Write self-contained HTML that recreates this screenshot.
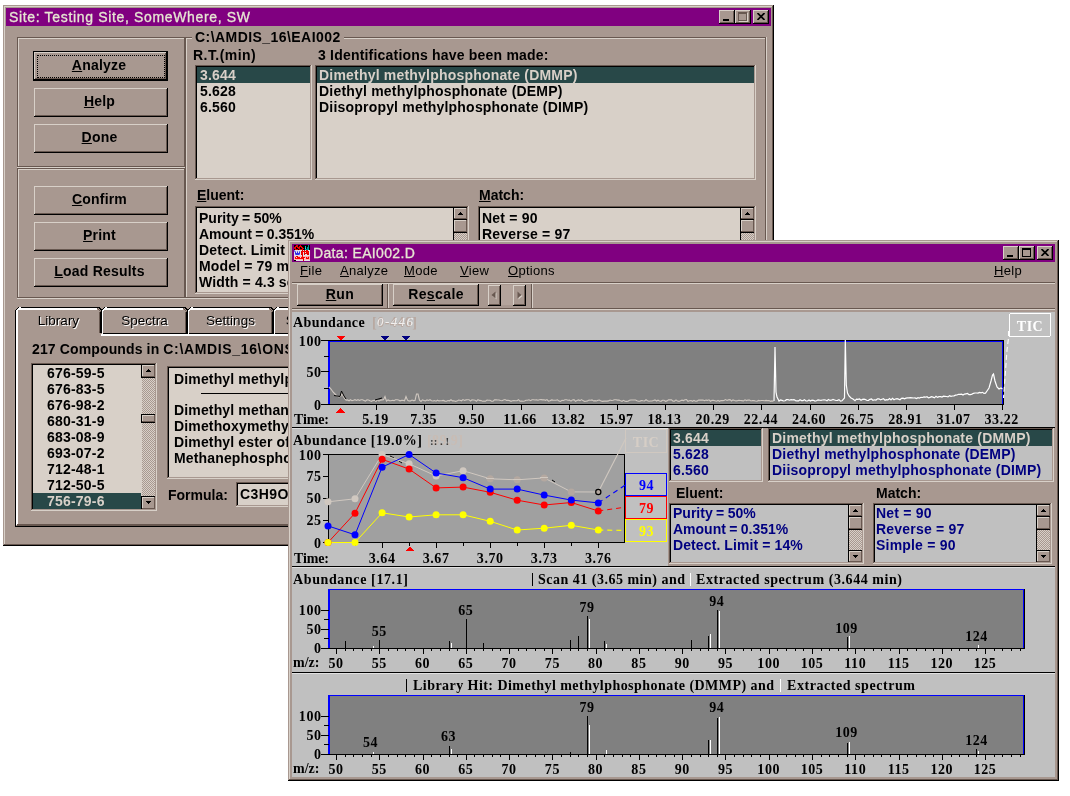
<!DOCTYPE html>
<html><head><meta charset="utf-8"><title>AMDIS</title>
<style>
html,body{margin:0;padding:0}
body{width:1070px;height:796px;position:relative;overflow:hidden;background:#fff;font-family:"Liberation Sans",sans-serif}
div,svg,span.a{position:absolute;box-sizing:border-box}
.t{white-space:pre;line-height:16px;height:16px;color:#000;will-change:transform}
.b{font-family:"Liberation Sans",sans-serif;font-weight:bold;font-size:14px;letter-spacing:0.2px}
.n{font-family:"Liberation Sans",sans-serif;font-weight:normal;font-size:14px;letter-spacing:0.3px}
.s{font-family:"Liberation Serif",serif;font-weight:bold;font-size:14px;letter-spacing:0.4px}
u{text-decoration:underline;text-underline-offset:1px}
svg text{font-family:"Liberation Serif",serif;font-weight:bold;font-size:14px}
</style></head>
<body>
<div style="left:3px;top:5px;width:771px;height:541px;background:#a89890;"></div>
<div style="left:3px;top:5px;width:771px;height:1px;background:#a89890;"></div>
<div style="left:3px;top:5px;width:1px;height:541px;background:#a89890;"></div>
<div style="left:3px;top:545px;width:771px;height:1px;background:#000;"></div>
<div style="left:773px;top:5px;width:1px;height:541px;background:#000;"></div>
<div style="left:4px;top:6px;width:769px;height:1px;background:#d8d0c8;"></div>
<div style="left:4px;top:6px;width:1px;height:539px;background:#d8d0c8;"></div>
<div style="left:4px;top:544px;width:769px;height:1px;background:#685850;"></div>
<div style="left:772px;top:6px;width:1px;height:539px;background:#685850;"></div>
<div style="left:6px;top:8px;width:765px;height:18px;background:#800080;"></div>
<div class="t n" style="left:9px;top:9px;color:#e6e6d2;letter-spacing:0.66px;-webkit-text-stroke:0.3px #e6e6d2">Site: Testing Site, SomeWhere, SW</div>
<div style="left:719px;top:10px;width:16px;height:14px;background:#a89890;"></div>
<div style="left:719px;top:10px;width:16px;height:1px;background:#d8d0c8;"></div>
<div style="left:719px;top:10px;width:1px;height:14px;background:#d8d0c8;"></div>
<div style="left:719px;top:23px;width:16px;height:1px;background:#000;"></div>
<div style="left:734px;top:10px;width:1px;height:14px;background:#000;"></div>
<div style="left:720px;top:11px;width:14px;height:1px;background:#a89890;"></div>
<div style="left:720px;top:11px;width:1px;height:12px;background:#a89890;"></div>
<div style="left:720px;top:22px;width:14px;height:1px;background:#685850;"></div>
<div style="left:733px;top:11px;width:1px;height:12px;background:#685850;"></div>
<div style="left:723px;top:19px;width:6px;height:2px;background:#000;"></div>
<div style="left:735px;top:10px;width:16px;height:14px;background:#a89890;"></div>
<div style="left:735px;top:10px;width:16px;height:1px;background:#d8d0c8;"></div>
<div style="left:735px;top:10px;width:1px;height:14px;background:#d8d0c8;"></div>
<div style="left:735px;top:23px;width:16px;height:1px;background:#000;"></div>
<div style="left:750px;top:10px;width:1px;height:14px;background:#000;"></div>
<div style="left:736px;top:11px;width:14px;height:1px;background:#a89890;"></div>
<div style="left:736px;top:11px;width:1px;height:12px;background:#a89890;"></div>
<div style="left:736px;top:22px;width:14px;height:1px;background:#685850;"></div>
<div style="left:749px;top:11px;width:1px;height:12px;background:#685850;"></div>
<div style="left:738px;top:12px;width:9px;height:9px;border:1px solid #685850;border-top-width:2px;box-shadow:1px 1px 0 #d8d0c8"></div>
<div style="left:753px;top:10px;width:16px;height:14px;background:#a89890;"></div>
<div style="left:753px;top:10px;width:16px;height:1px;background:#d8d0c8;"></div>
<div style="left:753px;top:10px;width:1px;height:14px;background:#d8d0c8;"></div>
<div style="left:753px;top:23px;width:16px;height:1px;background:#000;"></div>
<div style="left:768px;top:10px;width:1px;height:14px;background:#000;"></div>
<div style="left:754px;top:11px;width:14px;height:1px;background:#a89890;"></div>
<div style="left:754px;top:11px;width:1px;height:12px;background:#a89890;"></div>
<div style="left:754px;top:22px;width:14px;height:1px;background:#685850;"></div>
<div style="left:767px;top:11px;width:1px;height:12px;background:#685850;"></div>
<svg style="left:757px;top:13px" width="8" height="7" viewBox="0 0 8 7"><path d="M0.5 0 L7.5 7 M7.5 0 L0.5 7" stroke="#000" stroke-width="1.7" fill="none"/></svg>
<div style="left:17px;top:37px;width:169px;height:1px;background:#685850;"></div>
<div style="left:17px;top:37px;width:1px;height:131px;background:#685850;"></div>
<div style="left:17px;top:167px;width:169px;height:1px;background:#d8d0c8;"></div>
<div style="left:185px;top:37px;width:1px;height:131px;background:#d8d0c8;"></div>
<div style="left:18px;top:38px;width:167px;height:1px;background:#d8d0c8;"></div>
<div style="left:18px;top:38px;width:1px;height:129px;background:#d8d0c8;"></div>
<div style="left:18px;top:166px;width:167px;height:1px;background:#685850;"></div>
<div style="left:184px;top:38px;width:1px;height:129px;background:#685850;"></div>
<div style="left:17px;top:168px;width:169px;height:1px;background:#685850;"></div>
<div style="left:17px;top:168px;width:1px;height:131px;background:#685850;"></div>
<div style="left:17px;top:298px;width:169px;height:1px;background:#d8d0c8;"></div>
<div style="left:185px;top:168px;width:1px;height:131px;background:#d8d0c8;"></div>
<div style="left:18px;top:169px;width:167px;height:1px;background:#d8d0c8;"></div>
<div style="left:18px;top:169px;width:1px;height:129px;background:#d8d0c8;"></div>
<div style="left:18px;top:297px;width:167px;height:1px;background:#685850;"></div>
<div style="left:184px;top:169px;width:1px;height:129px;background:#685850;"></div>
<div style="left:185px;top:37px;width:582px;height:1px;background:#685850;"></div>
<div style="left:185px;top:37px;width:1px;height:262px;background:#685850;"></div>
<div style="left:185px;top:298px;width:582px;height:1px;background:#d8d0c8;"></div>
<div style="left:766px;top:37px;width:1px;height:262px;background:#d8d0c8;"></div>
<div style="left:186px;top:38px;width:580px;height:1px;background:#d8d0c8;"></div>
<div style="left:186px;top:38px;width:1px;height:260px;background:#d8d0c8;"></div>
<div style="left:186px;top:297px;width:580px;height:1px;background:#685850;"></div>
<div style="left:765px;top:38px;width:1px;height:260px;background:#685850;"></div>
<div style="left:192px;top:30px;width:152px;height:14px;background:#a89890;"></div>
<div class="t b" style="left:195px;top:29px;letter-spacing:0.44px">C:\AMDIS_16\EAI002</div>
<div style="left:33px;top:51px;width:135px;height:30px;background:#000;"></div>
<div style="left:34px;top:52px;width:133px;height:28px;background:#a89890;"></div>
<div style="left:34px;top:52px;width:133px;height:1px;background:#d8d0c8;"></div>
<div style="left:34px;top:52px;width:1px;height:28px;background:#d8d0c8;"></div>
<div style="left:34px;top:79px;width:133px;height:1px;background:#000;"></div>
<div style="left:166px;top:52px;width:1px;height:28px;background:#000;"></div>
<div style="left:35px;top:53px;width:131px;height:1px;background:#a89890;"></div>
<div style="left:35px;top:53px;width:1px;height:26px;background:#a89890;"></div>
<div style="left:35px;top:78px;width:131px;height:1px;background:#685850;"></div>
<div style="left:165px;top:53px;width:1px;height:26px;background:#685850;"></div>
<div style="left:37px;top:55px;width:128px;height:23px;border:1px dotted #000"></div>
<div class="t b" style="left:33px;top:57px;width:132px;text-align:center;"><u>A</u>nalyze</div>
<div style="left:34px;top:88px;width:134px;height:29px;background:#a89890;"></div>
<div style="left:34px;top:88px;width:134px;height:1px;background:#d8d0c8;"></div>
<div style="left:34px;top:88px;width:1px;height:29px;background:#d8d0c8;"></div>
<div style="left:34px;top:116px;width:134px;height:1px;background:#000;"></div>
<div style="left:167px;top:88px;width:1px;height:29px;background:#000;"></div>
<div style="left:35px;top:89px;width:132px;height:1px;background:#a89890;"></div>
<div style="left:35px;top:89px;width:1px;height:27px;background:#a89890;"></div>
<div style="left:35px;top:115px;width:132px;height:1px;background:#685850;"></div>
<div style="left:166px;top:89px;width:1px;height:27px;background:#685850;"></div>
<div class="t b" style="left:34px;top:93px;width:131px;text-align:center;"><u>H</u>elp</div>
<div style="left:34px;top:124px;width:134px;height:29px;background:#a89890;"></div>
<div style="left:34px;top:124px;width:134px;height:1px;background:#d8d0c8;"></div>
<div style="left:34px;top:124px;width:1px;height:29px;background:#d8d0c8;"></div>
<div style="left:34px;top:152px;width:134px;height:1px;background:#000;"></div>
<div style="left:167px;top:124px;width:1px;height:29px;background:#000;"></div>
<div style="left:35px;top:125px;width:132px;height:1px;background:#a89890;"></div>
<div style="left:35px;top:125px;width:1px;height:27px;background:#a89890;"></div>
<div style="left:35px;top:151px;width:132px;height:1px;background:#685850;"></div>
<div style="left:166px;top:125px;width:1px;height:27px;background:#685850;"></div>
<div class="t b" style="left:34px;top:129px;width:131px;text-align:center;"><u>D</u>one</div>
<div style="left:34px;top:186px;width:134px;height:29px;background:#a89890;"></div>
<div style="left:34px;top:186px;width:134px;height:1px;background:#d8d0c8;"></div>
<div style="left:34px;top:186px;width:1px;height:29px;background:#d8d0c8;"></div>
<div style="left:34px;top:214px;width:134px;height:1px;background:#000;"></div>
<div style="left:167px;top:186px;width:1px;height:29px;background:#000;"></div>
<div style="left:35px;top:187px;width:132px;height:1px;background:#a89890;"></div>
<div style="left:35px;top:187px;width:1px;height:27px;background:#a89890;"></div>
<div style="left:35px;top:213px;width:132px;height:1px;background:#685850;"></div>
<div style="left:166px;top:187px;width:1px;height:27px;background:#685850;"></div>
<div class="t b" style="left:34px;top:191px;width:131px;text-align:center;"><u>C</u>onfirm</div>
<div style="left:34px;top:222px;width:134px;height:29px;background:#a89890;"></div>
<div style="left:34px;top:222px;width:134px;height:1px;background:#d8d0c8;"></div>
<div style="left:34px;top:222px;width:1px;height:29px;background:#d8d0c8;"></div>
<div style="left:34px;top:250px;width:134px;height:1px;background:#000;"></div>
<div style="left:167px;top:222px;width:1px;height:29px;background:#000;"></div>
<div style="left:35px;top:223px;width:132px;height:1px;background:#a89890;"></div>
<div style="left:35px;top:223px;width:1px;height:27px;background:#a89890;"></div>
<div style="left:35px;top:249px;width:132px;height:1px;background:#685850;"></div>
<div style="left:166px;top:223px;width:1px;height:27px;background:#685850;"></div>
<div class="t b" style="left:34px;top:227px;width:131px;text-align:center;"><u>P</u>rint</div>
<div style="left:34px;top:258px;width:134px;height:29px;background:#a89890;"></div>
<div style="left:34px;top:258px;width:134px;height:1px;background:#d8d0c8;"></div>
<div style="left:34px;top:258px;width:1px;height:29px;background:#d8d0c8;"></div>
<div style="left:34px;top:286px;width:134px;height:1px;background:#000;"></div>
<div style="left:167px;top:258px;width:1px;height:29px;background:#000;"></div>
<div style="left:35px;top:259px;width:132px;height:1px;background:#a89890;"></div>
<div style="left:35px;top:259px;width:1px;height:27px;background:#a89890;"></div>
<div style="left:35px;top:285px;width:132px;height:1px;background:#685850;"></div>
<div style="left:166px;top:259px;width:1px;height:27px;background:#685850;"></div>
<div class="t b" style="left:34px;top:263px;width:131px;text-align:center;"><u>L</u>oad Results</div>
<div class="t b" style="left:193px;top:47px;letter-spacing:0.45px">R.T.(min)</div>
<div class="t b" style="left:318px;top:47px;">3 Identifications have been made:</div>
<div style="left:195px;top:65px;width:117px;height:115px;background:#d8d0c8;"></div>
<div style="left:195px;top:65px;width:117px;height:1px;background:#685850;"></div>
<div style="left:195px;top:65px;width:1px;height:115px;background:#685850;"></div>
<div style="left:195px;top:179px;width:117px;height:1px;background:#d8d0c8;"></div>
<div style="left:311px;top:65px;width:1px;height:115px;background:#d8d0c8;"></div>
<div style="left:196px;top:66px;width:115px;height:1px;background:#000;"></div>
<div style="left:196px;top:66px;width:1px;height:113px;background:#000;"></div>
<div style="left:196px;top:178px;width:115px;height:1px;background:#a89890;"></div>
<div style="left:310px;top:66px;width:1px;height:113px;background:#a89890;"></div>
<div style="left:197px;top:67px;width:113px;height:16px;background:#284848;"></div>
<div class="t b" style="left:200px;top:67px;color:#d8d0c8">3.644</div>
<div class="t b" style="left:200px;top:83px;">5.628</div>
<div class="t b" style="left:200px;top:99px;">6.560</div>
<div style="left:315px;top:65px;width:441px;height:115px;background:#d8d0c8;"></div>
<div style="left:315px;top:65px;width:441px;height:1px;background:#685850;"></div>
<div style="left:315px;top:65px;width:1px;height:115px;background:#685850;"></div>
<div style="left:315px;top:179px;width:441px;height:1px;background:#d8d0c8;"></div>
<div style="left:755px;top:65px;width:1px;height:115px;background:#d8d0c8;"></div>
<div style="left:316px;top:66px;width:439px;height:1px;background:#000;"></div>
<div style="left:316px;top:66px;width:1px;height:113px;background:#000;"></div>
<div style="left:316px;top:178px;width:439px;height:1px;background:#a89890;"></div>
<div style="left:754px;top:66px;width:1px;height:113px;background:#a89890;"></div>
<div style="left:317px;top:67px;width:437px;height:16px;background:#284848;"></div>
<div class="t b" style="left:319px;top:67px;color:#d8d0c8">Dimethyl methylphosphonate (DMMP)</div>
<div class="t b" style="left:319px;top:83px;">Diethyl methylphosphonate (DEMP)</div>
<div class="t b" style="left:319px;top:99px;">Diisopropyl methylphosphonate (DIMP)</div>
<div class="t b" style="left:197px;top:187px;letter-spacing:0"><u>E</u>luent:</div>
<div class="t b" style="left:479px;top:187px;letter-spacing:0"><u>M</u>atch:</div>
<div style="left:195px;top:206px;width:274px;height:88px;background:#d8d0c8;"></div>
<div style="left:195px;top:206px;width:274px;height:1px;background:#685850;"></div>
<div style="left:195px;top:206px;width:1px;height:88px;background:#685850;"></div>
<div style="left:195px;top:293px;width:274px;height:1px;background:#d8d0c8;"></div>
<div style="left:468px;top:206px;width:1px;height:88px;background:#d8d0c8;"></div>
<div style="left:196px;top:207px;width:272px;height:1px;background:#000;"></div>
<div style="left:196px;top:207px;width:1px;height:86px;background:#000;"></div>
<div style="left:196px;top:292px;width:272px;height:1px;background:#a89890;"></div>
<div style="left:467px;top:207px;width:1px;height:86px;background:#a89890;"></div>
<div class="t b" style="left:199px;top:210px;letter-spacing:0;word-spacing:-0.5px">Purity = 50%</div>
<div class="t b" style="left:199px;top:226px;letter-spacing:0;word-spacing:-0.5px">Amount = 0.351%</div>
<div class="t b" style="left:199px;top:242px;letter-spacing:0.15px">Detect. Limit = 14%</div>
<div class="t b" style="left:199px;top:258px;letter-spacing:0.15px">Model = 79 m/z</div>
<div class="t b" style="left:199px;top:274px;letter-spacing:0.15px">Width = 4.3 scans</div>
<div style="left:453px;top:208px;width:1px;height:84px;background:#000;"></div>
<div style="left:454px;top:208px;width:13px;height:84px;background-color:#d8d0c8;background-image:linear-gradient(45deg,#a89890 25%,transparent 25%,transparent 75%,#a89890 75%),linear-gradient(45deg,#a89890 25%,transparent 25%,transparent 75%,#a89890 75%);background-size:2px 2px;background-position:0 0,1px 1px;"></div>
<div style="left:454px;top:208px;width:13px;height:11px;background:#a89890;"></div>
<div style="left:454px;top:208px;width:13px;height:1px;background:#d8d0c8;"></div>
<div style="left:454px;top:208px;width:1px;height:11px;background:#d8d0c8;"></div>
<div style="left:454px;top:218px;width:13px;height:1px;background:#685850;"></div>
<div style="left:466px;top:208px;width:1px;height:11px;background:#685850;"></div>
<div style="left:454px;top:219px;width:13px;height:1px;background:#000;"></div>
<svg style="left:458px;top:212px" width="5" height="3" viewBox="0 0 5 3" shape-rendering="crispEdges"><path d="M2 0h1v1h1v1h1v1h-5v-1h1v-1h1z" fill="#000"/></svg>
<div style="left:454px;top:281px;width:13px;height:11px;background:#a89890;"></div>
<div style="left:454px;top:281px;width:13px;height:1px;background:#d8d0c8;"></div>
<div style="left:454px;top:281px;width:1px;height:11px;background:#d8d0c8;"></div>
<div style="left:454px;top:291px;width:13px;height:1px;background:#685850;"></div>
<div style="left:466px;top:281px;width:1px;height:11px;background:#685850;"></div>
<div style="left:454px;top:280px;width:13px;height:1px;background:#000;"></div>
<svg style="left:458px;top:285px" width="5" height="3" viewBox="0 0 5 3" shape-rendering="crispEdges"><path d="M0 0h5v1h-1v1h-1v1h-1v-1h-1v-1h-1z" fill="#000"/></svg>
<div style="left:454px;top:220px;width:13px;height:12px;background:#a89890;"></div>
<div style="left:454px;top:220px;width:13px;height:1px;background:#d8d0c8;"></div>
<div style="left:454px;top:220px;width:1px;height:12px;background:#d8d0c8;"></div>
<div style="left:454px;top:231px;width:13px;height:1px;background:#685850;"></div>
<div style="left:466px;top:220px;width:1px;height:12px;background:#685850;"></div>
<div style="left:454px;top:232px;width:13px;height:1px;background:#000;"></div>
<div style="left:478px;top:206px;width:278px;height:88px;background:#d8d0c8;"></div>
<div style="left:478px;top:206px;width:278px;height:1px;background:#685850;"></div>
<div style="left:478px;top:206px;width:1px;height:88px;background:#685850;"></div>
<div style="left:478px;top:293px;width:278px;height:1px;background:#d8d0c8;"></div>
<div style="left:755px;top:206px;width:1px;height:88px;background:#d8d0c8;"></div>
<div style="left:479px;top:207px;width:276px;height:1px;background:#000;"></div>
<div style="left:479px;top:207px;width:1px;height:86px;background:#000;"></div>
<div style="left:479px;top:292px;width:276px;height:1px;background:#a89890;"></div>
<div style="left:754px;top:207px;width:1px;height:86px;background:#a89890;"></div>
<div class="t b" style="left:482px;top:210px;letter-spacing:0.2px">Net = 90</div>
<div class="t b" style="left:482px;top:226px;letter-spacing:0.2px">Reverse = 97</div>
<div class="t b" style="left:482px;top:242px;letter-spacing:0.2px">Simple = 90</div>
<div style="left:740px;top:208px;width:1px;height:84px;background:#000;"></div>
<div style="left:741px;top:208px;width:13px;height:84px;background-color:#d8d0c8;background-image:linear-gradient(45deg,#a89890 25%,transparent 25%,transparent 75%,#a89890 75%),linear-gradient(45deg,#a89890 25%,transparent 25%,transparent 75%,#a89890 75%);background-size:2px 2px;background-position:0 0,1px 1px;"></div>
<div style="left:741px;top:208px;width:13px;height:11px;background:#a89890;"></div>
<div style="left:741px;top:208px;width:13px;height:1px;background:#d8d0c8;"></div>
<div style="left:741px;top:208px;width:1px;height:11px;background:#d8d0c8;"></div>
<div style="left:741px;top:218px;width:13px;height:1px;background:#685850;"></div>
<div style="left:753px;top:208px;width:1px;height:11px;background:#685850;"></div>
<div style="left:741px;top:219px;width:13px;height:1px;background:#000;"></div>
<svg style="left:745px;top:212px" width="5" height="3" viewBox="0 0 5 3" shape-rendering="crispEdges"><path d="M2 0h1v1h1v1h1v1h-5v-1h1v-1h1z" fill="#000"/></svg>
<div style="left:741px;top:281px;width:13px;height:11px;background:#a89890;"></div>
<div style="left:741px;top:281px;width:13px;height:1px;background:#d8d0c8;"></div>
<div style="left:741px;top:281px;width:1px;height:11px;background:#d8d0c8;"></div>
<div style="left:741px;top:291px;width:13px;height:1px;background:#685850;"></div>
<div style="left:753px;top:281px;width:1px;height:11px;background:#685850;"></div>
<div style="left:741px;top:280px;width:13px;height:1px;background:#000;"></div>
<svg style="left:745px;top:285px" width="5" height="3" viewBox="0 0 5 3" shape-rendering="crispEdges"><path d="M0 0h5v1h-1v1h-1v1h-1v-1h-1v-1h-1z" fill="#000"/></svg>
<div style="left:741px;top:220px;width:13px;height:12px;background:#a89890;"></div>
<div style="left:741px;top:220px;width:13px;height:1px;background:#d8d0c8;"></div>
<div style="left:741px;top:220px;width:1px;height:12px;background:#d8d0c8;"></div>
<div style="left:741px;top:231px;width:13px;height:1px;background:#685850;"></div>
<div style="left:753px;top:220px;width:1px;height:12px;background:#685850;"></div>
<div style="left:741px;top:232px;width:13px;height:1px;background:#000;"></div>
<div style="left:15px;top:311px;width:757px;height:216px;background:#a89890;"></div>
<svg style="left:10px;top:300px" width="765" height="232" viewBox="10 300 765 232" shape-rendering="crispEdges"><rect x="15" y="311" width="1" height="216" fill="#000"/><rect x="16" y="311" width="2" height="214" fill="#fff"/><rect x="102" y="333" width="670" height="1" fill="#000"/><rect x="101" y="334" width="671" height="2" fill="#fff"/><rect x="17" y="524" width="755" height="2" fill="#685850"/><rect x="15" y="526" width="758" height="1" fill="#000"/><rect x="770" y="336" width="1" height="189" fill="#685850"/><rect x="771" y="334" width="2" height="193" fill="#000"/><rect x="19" y="307" width="79" height="1" fill="#000"/><rect x="19" y="308" width="78" height="2" fill="#fff"/><rect x="16" y="311" width="2" height="23" fill="#fff"/><rect x="99" y="312" width="1" height="21" fill="#685850"/><rect x="100" y="311" width="2" height="22" fill="#000"/><rect x="15" y="310" width="1" height="1" fill="#000"/><rect x="16" y="310" width="2" height="1" fill="#fff"/><rect x="98" y="307" width="2" height="1" fill="#000"/><rect x="97" y="308" width="1" height="1" fill="#685850"/><rect x="16" y="309" width="1" height="1" fill="#000"/><rect x="17" y="309" width="2" height="1" fill="#fff"/><rect x="99" y="308" width="2" height="1" fill="#000"/><rect x="98" y="309" width="1" height="1" fill="#685850"/><rect x="17" y="308" width="1" height="1" fill="#000"/><rect x="18" y="308" width="2" height="1" fill="#fff"/><rect x="100" y="309" width="2" height="1" fill="#000"/><rect x="99" y="310" width="1" height="1" fill="#685850"/><rect x="18" y="307" width="1" height="1" fill="#000"/><rect x="19" y="307" width="2" height="1" fill="#fff"/><rect x="101" y="310" width="2" height="1" fill="#000"/><rect x="100" y="311" width="1" height="1" fill="#685850"/><rect x="105" y="307" width="79" height="1" fill="#000"/><rect x="105" y="308" width="78" height="2" fill="#fff"/><rect x="102" y="311" width="1" height="23" fill="#fff"/><rect x="185" y="312" width="1" height="21" fill="#685850"/><rect x="186" y="311" width="2" height="22" fill="#000"/><rect x="101" y="310" width="1" height="1" fill="#000"/><rect x="102" y="310" width="2" height="1" fill="#fff"/><rect x="184" y="307" width="2" height="1" fill="#000"/><rect x="183" y="308" width="1" height="1" fill="#685850"/><rect x="102" y="309" width="1" height="1" fill="#000"/><rect x="103" y="309" width="2" height="1" fill="#fff"/><rect x="185" y="308" width="2" height="1" fill="#000"/><rect x="184" y="309" width="1" height="1" fill="#685850"/><rect x="103" y="308" width="1" height="1" fill="#000"/><rect x="104" y="308" width="2" height="1" fill="#fff"/><rect x="186" y="309" width="2" height="1" fill="#000"/><rect x="185" y="310" width="1" height="1" fill="#685850"/><rect x="104" y="307" width="1" height="1" fill="#000"/><rect x="105" y="307" width="2" height="1" fill="#fff"/><rect x="187" y="310" width="2" height="1" fill="#000"/><rect x="186" y="311" width="1" height="1" fill="#685850"/><rect x="191" y="307" width="79" height="1" fill="#000"/><rect x="191" y="308" width="78" height="2" fill="#fff"/><rect x="188" y="311" width="1" height="23" fill="#fff"/><rect x="271" y="312" width="1" height="21" fill="#685850"/><rect x="272" y="311" width="2" height="22" fill="#000"/><rect x="187" y="310" width="1" height="1" fill="#000"/><rect x="188" y="310" width="2" height="1" fill="#fff"/><rect x="270" y="307" width="2" height="1" fill="#000"/><rect x="269" y="308" width="1" height="1" fill="#685850"/><rect x="188" y="309" width="1" height="1" fill="#000"/><rect x="189" y="309" width="2" height="1" fill="#fff"/><rect x="271" y="308" width="2" height="1" fill="#000"/><rect x="270" y="309" width="1" height="1" fill="#685850"/><rect x="189" y="308" width="1" height="1" fill="#000"/><rect x="190" y="308" width="2" height="1" fill="#fff"/><rect x="272" y="309" width="2" height="1" fill="#000"/><rect x="271" y="310" width="1" height="1" fill="#685850"/><rect x="190" y="307" width="1" height="1" fill="#000"/><rect x="191" y="307" width="2" height="1" fill="#fff"/><rect x="273" y="310" width="2" height="1" fill="#000"/><rect x="272" y="311" width="1" height="1" fill="#685850"/><rect x="277" y="307" width="79" height="1" fill="#000"/><rect x="277" y="308" width="78" height="2" fill="#fff"/><rect x="274" y="311" width="1" height="23" fill="#fff"/><rect x="357" y="312" width="1" height="21" fill="#685850"/><rect x="358" y="311" width="2" height="22" fill="#000"/><rect x="273" y="310" width="1" height="1" fill="#000"/><rect x="274" y="310" width="2" height="1" fill="#fff"/><rect x="356" y="307" width="2" height="1" fill="#000"/><rect x="355" y="308" width="1" height="1" fill="#685850"/><rect x="274" y="309" width="1" height="1" fill="#000"/><rect x="275" y="309" width="2" height="1" fill="#fff"/><rect x="357" y="308" width="2" height="1" fill="#000"/><rect x="356" y="309" width="1" height="1" fill="#685850"/><rect x="275" y="308" width="1" height="1" fill="#000"/><rect x="276" y="308" width="2" height="1" fill="#fff"/><rect x="358" y="309" width="2" height="1" fill="#000"/><rect x="357" y="310" width="1" height="1" fill="#685850"/><rect x="276" y="307" width="1" height="1" fill="#000"/><rect x="277" y="307" width="2" height="1" fill="#fff"/><rect x="359" y="310" width="2" height="1" fill="#000"/><rect x="358" y="311" width="1" height="1" fill="#685850"/></svg>
<div class="t n" style="left:16px;top:313px;width:85px;text-align:center;font-size:13.5px;letter-spacing:0px;text-shadow:1px 1px 0 #fff;color:#000">Library</div>
<div class="t n" style="left:102px;top:313px;width:85px;text-align:center;font-size:13.5px;letter-spacing:0px;text-shadow:1px 1px 0 #fff;color:#000">Spectra</div>
<div class="t n" style="left:188px;top:313px;width:85px;text-align:center;font-size:13.5px;letter-spacing:0px;text-shadow:1px 1px 0 #fff;color:#000">Settings</div>
<div class="t n" style="left:274px;top:313px;width:85px;text-align:center;font-size:13.5px;letter-spacing:0px;text-shadow:1px 1px 0 #fff;color:#000">Standards</div>
<div class="t b" style="left:32px;top:341px;letter-spacing:0.65px"><span style="letter-spacing:0.13px">217 Compounds in </span>C:\AMDIS_16\ONSITE.MSL</div>
<div style="left:31px;top:363px;width:126px;height:148px;background:#d8d0c8;"></div>
<div style="left:31px;top:363px;width:126px;height:1px;background:#685850;"></div>
<div style="left:31px;top:363px;width:1px;height:148px;background:#685850;"></div>
<div style="left:31px;top:510px;width:126px;height:1px;background:#d8d0c8;"></div>
<div style="left:156px;top:363px;width:1px;height:148px;background:#d8d0c8;"></div>
<div style="left:32px;top:364px;width:124px;height:1px;background:#000;"></div>
<div style="left:32px;top:364px;width:1px;height:146px;background:#000;"></div>
<div style="left:32px;top:509px;width:124px;height:1px;background:#a89890;"></div>
<div style="left:155px;top:364px;width:1px;height:146px;background:#a89890;"></div>
<div class="t b" style="left:47px;top:365px;">676-59-5</div>
<div class="t b" style="left:47px;top:381px;">676-83-5</div>
<div class="t b" style="left:47px;top:397px;">676-98-2</div>
<div class="t b" style="left:47px;top:413px;">680-31-9</div>
<div class="t b" style="left:47px;top:429px;">683-08-9</div>
<div class="t b" style="left:47px;top:445px;">693-07-2</div>
<div class="t b" style="left:47px;top:461px;">712-48-1</div>
<div class="t b" style="left:47px;top:477px;">712-50-5</div>
<div style="left:33px;top:493px;width:108px;height:16px;background:#284848;"></div>
<div class="t b" style="left:47px;top:493px;color:#d8d0c8">756-79-6</div>
<div style="left:141px;top:365px;width:1px;height:144px;background:#d8d0c8;"></div>
<div style="left:141px;top:365px;width:1px;height:13px;background:#000;"></div>
<div style="left:141px;top:496px;width:1px;height:13px;background:#000;"></div>
<div style="left:141px;top:414px;width:1px;height:9px;background:#000;"></div>
<div style="left:142px;top:365px;width:13px;height:144px;background-color:#d8d0c8;background-image:linear-gradient(45deg,#a89890 25%,transparent 25%,transparent 75%,#a89890 75%),linear-gradient(45deg,#a89890 25%,transparent 25%,transparent 75%,#a89890 75%);background-size:2px 2px;background-position:0 0,1px 1px;"></div>
<div style="left:142px;top:365px;width:13px;height:12px;background:#a89890;"></div>
<div style="left:142px;top:365px;width:13px;height:1px;background:#d8d0c8;"></div>
<div style="left:142px;top:365px;width:1px;height:12px;background:#d8d0c8;"></div>
<div style="left:142px;top:376px;width:13px;height:1px;background:#685850;"></div>
<div style="left:154px;top:365px;width:1px;height:12px;background:#685850;"></div>
<div style="left:142px;top:377px;width:13px;height:1px;background:#000;"></div>
<svg style="left:146px;top:369px" width="5" height="3" viewBox="0 0 5 3" shape-rendering="crispEdges"><path d="M2 0h1v1h1v1h1v1h-5v-1h1v-1h1z" fill="#000"/></svg>
<div style="left:142px;top:497px;width:13px;height:12px;background:#a89890;"></div>
<div style="left:142px;top:497px;width:13px;height:1px;background:#d8d0c8;"></div>
<div style="left:142px;top:497px;width:1px;height:12px;background:#d8d0c8;"></div>
<div style="left:142px;top:508px;width:13px;height:1px;background:#685850;"></div>
<div style="left:154px;top:497px;width:1px;height:12px;background:#685850;"></div>
<div style="left:142px;top:496px;width:13px;height:1px;background:#000;"></div>
<svg style="left:146px;top:501px" width="5" height="3" viewBox="0 0 5 3" shape-rendering="crispEdges"><path d="M0 0h5v1h-1v1h-1v1h-1v-1h-1v-1h-1z" fill="#000"/></svg>
<div style="left:142px;top:415px;width:13px;height:7px;background:#a89890;"></div>
<div style="left:142px;top:415px;width:13px;height:1px;background:#d8d0c8;"></div>
<div style="left:142px;top:415px;width:1px;height:7px;background:#d8d0c8;"></div>
<div style="left:142px;top:421px;width:13px;height:1px;background:#685850;"></div>
<div style="left:154px;top:415px;width:1px;height:7px;background:#685850;"></div>
<div style="left:142px;top:422px;width:13px;height:1px;background:#000;"></div>
<div style="left:142px;top:414px;width:13px;height:1px;background:#000;"></div>
<div style="left:167px;top:366px;width:420px;height:113px;background:#d8d0c8;"></div>
<div style="left:167px;top:366px;width:420px;height:1px;background:#685850;"></div>
<div style="left:167px;top:366px;width:1px;height:113px;background:#685850;"></div>
<div style="left:167px;top:478px;width:420px;height:1px;background:#d8d0c8;"></div>
<div style="left:586px;top:366px;width:1px;height:113px;background:#d8d0c8;"></div>
<div style="left:168px;top:367px;width:418px;height:1px;background:#000;"></div>
<div style="left:168px;top:367px;width:1px;height:111px;background:#000;"></div>
<div style="left:168px;top:477px;width:418px;height:1px;background:#a89890;"></div>
<div style="left:585px;top:367px;width:1px;height:111px;background:#a89890;"></div>
<div class="t b" style="left:174px;top:371px;letter-spacing:0.15px">Dimethyl methylphosphonate</div>
<div style="left:201px;top:393px;width:200px;height:1px;background:#000;"></div>
<div class="t b" style="left:174px;top:402px;letter-spacing:0.15px">Dimethyl methanephosphonate</div>
<div class="t b" style="left:174px;top:418px;letter-spacing:0.15px">Dimethoxymethylphosphine oxide</div>
<div class="t b" style="left:174px;top:434px;letter-spacing:0.15px">Dimethyl ester of methylphosphonic acid</div>
<div class="t b" style="left:174px;top:450px;letter-spacing:0.15px">Methanephosphonic acid dimethyl ester</div>
<div class="t b" style="left:168px;top:487px;letter-spacing:0px">Formula:</div>
<div style="left:236px;top:482px;width:120px;height:25px;background:#d8d0c8;"></div>
<div style="left:236px;top:482px;width:120px;height:1px;background:#685850;"></div>
<div style="left:236px;top:482px;width:1px;height:25px;background:#685850;"></div>
<div style="left:236px;top:506px;width:120px;height:1px;background:#d8d0c8;"></div>
<div style="left:355px;top:482px;width:1px;height:25px;background:#d8d0c8;"></div>
<div style="left:237px;top:483px;width:118px;height:1px;background:#000;"></div>
<div style="left:237px;top:483px;width:1px;height:23px;background:#000;"></div>
<div style="left:237px;top:505px;width:118px;height:1px;background:#a89890;"></div>
<div style="left:354px;top:483px;width:1px;height:23px;background:#a89890;"></div>
<div class="t b" style="left:240px;top:486px;letter-spacing:0.4px">C3H9O3P</div>
<div style="left:288px;top:240px;width:771px;height:541px;background:#a89890;"></div>
<div style="left:288px;top:240px;width:771px;height:1px;background:#a89890;"></div>
<div style="left:288px;top:240px;width:1px;height:541px;background:#a89890;"></div>
<div style="left:288px;top:780px;width:771px;height:1px;background:#000;"></div>
<div style="left:1058px;top:240px;width:1px;height:541px;background:#000;"></div>
<div style="left:289px;top:241px;width:769px;height:1px;background:#d8d0c8;"></div>
<div style="left:289px;top:241px;width:1px;height:539px;background:#d8d0c8;"></div>
<div style="left:289px;top:779px;width:769px;height:1px;background:#685850;"></div>
<div style="left:1057px;top:241px;width:1px;height:539px;background:#685850;"></div>
<div style="left:292px;top:244px;width:763px;height:18px;background:#800080;"></div>
<svg style="left:294px;top:245px" width="16" height="16" viewBox="0 0 16 16" shape-rendering="crispEdges"><rect x="0" y="0" width="2" height="1" fill="#000"/><rect x="2" y="0" width="2" height="1" fill="#e00000"/><rect x="4" y="0" width="2" height="1" fill="#000"/><rect x="6" y="0" width="1" height="1" fill="#e00000"/><rect x="7" y="0" width="7" height="1" fill="#000"/><rect x="14" y="0" width="1" height="1" fill="#009090"/><rect x="15" y="0" width="1" height="1" fill="#000"/><rect x="0" y="1" width="1" height="1" fill="#000"/><rect x="1" y="1" width="1" height="1" fill="#e00000"/><rect x="2" y="1" width="1" height="1" fill="#ff0000"/><rect x="3" y="1" width="1" height="1" fill="#e00000"/><rect x="4" y="1" width="1" height="1" fill="#000"/><rect x="5" y="1" width="1" height="1" fill="#e00000"/><rect x="6" y="1" width="1" height="1" fill="#ff0000"/><rect x="7" y="1" width="1" height="1" fill="#e00000"/><rect x="8" y="1" width="3" height="1" fill="#000"/><rect x="11" y="1" width="1" height="1" fill="#00c8c8"/><rect x="12" y="1" width="2" height="1" fill="#000"/><rect x="14" y="1" width="1" height="1" fill="#009090"/><rect x="15" y="1" width="1" height="1" fill="#000"/><rect x="0" y="2" width="1" height="1" fill="#e00000"/><rect x="1" y="2" width="1" height="1" fill="#ff0000"/><rect x="2" y="2" width="1" height="1" fill="#000"/><rect x="3" y="2" width="1" height="1" fill="#ff0000"/><rect x="4" y="2" width="1" height="1" fill="#e00000"/><rect x="5" y="2" width="1" height="1" fill="#ff0000"/><rect x="6" y="2" width="1" height="1" fill="#000"/><rect x="7" y="2" width="1" height="1" fill="#ff0000"/><rect x="8" y="2" width="1" height="1" fill="#e00000"/><rect x="9" y="2" width="2" height="1" fill="#000"/><rect x="11" y="2" width="1" height="1" fill="#00c8c8"/><rect x="12" y="2" width="1" height="1" fill="#000"/><rect x="13" y="2" width="2" height="1" fill="#009090"/><rect x="15" y="2" width="1" height="1" fill="#000"/><rect x="0" y="3" width="2" height="1" fill="#e00000"/><rect x="2" y="3" width="2" height="1" fill="#000"/><rect x="4" y="3" width="2" height="1" fill="#e00000"/><rect x="6" y="3" width="2" height="1" fill="#000"/><rect x="8" y="3" width="1" height="1" fill="#ff0000"/><rect x="9" y="3" width="1" height="1" fill="#e00000"/><rect x="10" y="3" width="1" height="1" fill="#000"/><rect x="11" y="3" width="1" height="1" fill="#00ffff"/><rect x="12" y="3" width="1" height="1" fill="#000"/><rect x="13" y="3" width="2" height="1" fill="#009090"/><rect x="15" y="3" width="1" height="1" fill="#000"/><rect x="0" y="4" width="1" height="1" fill="#000"/><rect x="1" y="4" width="3" height="1" fill="#e00000"/><rect x="4" y="4" width="1" height="1" fill="#000"/><rect x="5" y="4" width="4" height="1" fill="#e00000"/><rect x="9" y="4" width="2" height="1" fill="#000"/><rect x="11" y="4" width="3" height="1" fill="#009090"/><rect x="14" y="4" width="1" height="1" fill="#00b0b0"/><rect x="15" y="4" width="1" height="1" fill="#000"/><rect x="0" y="5" width="1" height="1" fill="#7070f0"/><rect x="1" y="5" width="7" height="1" fill="#e4e0e8"/><rect x="8" y="5" width="1" height="1" fill="#e00000"/><rect x="9" y="5" width="1" height="1" fill="#e4e0e8"/><rect x="10" y="5" width="1" height="1" fill="#e00000"/><rect x="11" y="5" width="1" height="1" fill="#e4e0e8"/><rect x="12" y="5" width="2" height="1" fill="#e00000"/><rect x="14" y="5" width="2" height="1" fill="#e4e0e8"/><rect x="0" y="6" width="2" height="1" fill="#7070f0"/><rect x="2" y="6" width="1" height="1" fill="#e4e0e8"/><rect x="3" y="6" width="1" height="1" fill="#7070f0"/><rect x="4" y="6" width="1" height="1" fill="#e4e0e8"/><rect x="5" y="6" width="1" height="1" fill="#7070f0"/><rect x="6" y="6" width="1" height="1" fill="#e4e0e8"/><rect x="7" y="6" width="1" height="1" fill="#e00000"/><rect x="8" y="6" width="1" height="1" fill="#ff0000"/><rect x="9" y="6" width="1" height="1" fill="#e00000"/><rect x="10" y="6" width="1" height="1" fill="#ff0000"/><rect x="11" y="6" width="1" height="1" fill="#e00000"/><rect x="12" y="6" width="2" height="1" fill="#ff0000"/><rect x="14" y="6" width="1" height="1" fill="#e00000"/><rect x="15" y="6" width="1" height="1" fill="#e4e0e8"/><rect x="0" y="7" width="1" height="1" fill="#e4e0e8"/><rect x="1" y="7" width="1" height="1" fill="#3030e8"/><rect x="2" y="7" width="1" height="1" fill="#e4e0e8"/><rect x="3" y="7" width="1" height="1" fill="#3030e8"/><rect x="4" y="7" width="1" height="1" fill="#e4e0e8"/><rect x="5" y="7" width="1" height="1" fill="#3030e8"/><rect x="6" y="7" width="1" height="1" fill="#e4e0e8"/><rect x="7" y="7" width="1" height="1" fill="#e00000"/><rect x="8" y="7" width="1" height="1" fill="#ff0000"/><rect x="9" y="7" width="1" height="1" fill="#e4e0e8"/><rect x="10" y="7" width="1" height="1" fill="#ff0000"/><rect x="11" y="7" width="1" height="1" fill="#e4e0e8"/><rect x="12" y="7" width="1" height="1" fill="#e00000"/><rect x="13" y="7" width="2" height="1" fill="#ff0000"/><rect x="15" y="7" width="1" height="1" fill="#e4e0e8"/><rect x="0" y="8" width="1" height="1" fill="#e4e0e8"/><rect x="1" y="8" width="5" height="1" fill="#3030e8"/><rect x="6" y="8" width="1" height="1" fill="#e4e0e8"/><rect x="7" y="8" width="1" height="1" fill="#ff0000"/><rect x="8" y="8" width="1" height="1" fill="#e00000"/><rect x="9" y="8" width="1" height="1" fill="#e4e0e8"/><rect x="10" y="8" width="2" height="1" fill="#e00000"/><rect x="12" y="8" width="1" height="1" fill="#ff0000"/><rect x="13" y="8" width="2" height="1" fill="#e00000"/><rect x="15" y="8" width="1" height="1" fill="#e4e0e8"/><rect x="0" y="9" width="1" height="1" fill="#e4e0e8"/><rect x="1" y="9" width="1" height="1" fill="#7070f0"/><rect x="2" y="9" width="3" height="1" fill="#3030e8"/><rect x="5" y="9" width="1" height="1" fill="#7070f0"/><rect x="6" y="9" width="1" height="1" fill="#e4e0e8"/><rect x="7" y="9" width="2" height="1" fill="#e00000"/><rect x="9" y="9" width="1" height="1" fill="#e4e0e8"/><rect x="10" y="9" width="1" height="1" fill="#e00000"/><rect x="11" y="9" width="2" height="1" fill="#e4e0e8"/><rect x="13" y="9" width="2" height="1" fill="#e00000"/><rect x="15" y="9" width="1" height="1" fill="#e4e0e8"/><rect x="0" y="10" width="8" height="1" fill="#e4e0e8"/><rect x="8" y="10" width="1" height="1" fill="#e00000"/><rect x="9" y="10" width="7" height="1" fill="#e4e0e8"/><rect x="0" y="11" width="2" height="1" fill="#ffb4b4"/><rect x="2" y="11" width="2" height="1" fill="#e00000"/><rect x="4" y="11" width="4" height="1" fill="#ffb4b4"/><rect x="8" y="11" width="1" height="1" fill="#ff0000"/><rect x="9" y="11" width="5" height="1" fill="#ffb4b4"/><rect x="14" y="11" width="1" height="1" fill="#ff8080"/><rect x="15" y="11" width="1" height="1" fill="#ffb4b4"/><rect x="0" y="12" width="1" height="1" fill="#ffb4b4"/><rect x="1" y="12" width="1" height="1" fill="#ff0000"/><rect x="2" y="12" width="1" height="1" fill="#e4e0e8"/><rect x="3" y="12" width="3" height="1" fill="#ff0000"/><rect x="6" y="12" width="1" height="1" fill="#e4e0e8"/><rect x="7" y="12" width="2" height="1" fill="#ff0000"/><rect x="9" y="12" width="1" height="1" fill="#e00000"/><rect x="10" y="12" width="1" height="1" fill="#ff0000"/><rect x="11" y="12" width="1" height="1" fill="#ffb4b4"/><rect x="12" y="12" width="1" height="1" fill="#ff0000"/><rect x="13" y="12" width="1" height="1" fill="#ff8080"/><rect x="14" y="12" width="1" height="1" fill="#e00000"/><rect x="15" y="12" width="1" height="1" fill="#ffb4b4"/><rect x="0" y="13" width="1" height="1" fill="#ffb4b4"/><rect x="1" y="13" width="9" height="1" fill="#ff0000"/><rect x="10" y="13" width="1" height="1" fill="#e4e0e8"/><rect x="11" y="13" width="1" height="1" fill="#ffb4b4"/><rect x="12" y="13" width="1" height="1" fill="#ff0000"/><rect x="13" y="13" width="1" height="1" fill="#e00000"/><rect x="14" y="13" width="1" height="1" fill="#ff0000"/><rect x="15" y="13" width="1" height="1" fill="#ffb4b4"/><rect x="0" y="14" width="9" height="1" fill="#ffb4b4"/><rect x="9" y="14" width="1" height="1" fill="#e00000"/><rect x="10" y="14" width="6" height="1" fill="#ffb4b4"/><rect x="0" y="15" width="2" height="1" fill="#000"/><rect x="2" y="15" width="7" height="1" fill="#e4e0e8"/><rect x="9" y="15" width="1" height="1" fill="#e00000"/><rect x="10" y="15" width="6" height="1" fill="#e4e0e8"/></svg>
<div class="t n" style="left:313px;top:245px;color:#e6e6d2;letter-spacing:0.35px;-webkit-text-stroke:0.3px #e6e6d2">Data: EAI002.D</div>
<div style="left:1003px;top:246px;width:16px;height:14px;background:#a89890;"></div>
<div style="left:1003px;top:246px;width:16px;height:1px;background:#d8d0c8;"></div>
<div style="left:1003px;top:246px;width:1px;height:14px;background:#d8d0c8;"></div>
<div style="left:1003px;top:259px;width:16px;height:1px;background:#000;"></div>
<div style="left:1018px;top:246px;width:1px;height:14px;background:#000;"></div>
<div style="left:1004px;top:247px;width:14px;height:1px;background:#a89890;"></div>
<div style="left:1004px;top:247px;width:1px;height:12px;background:#a89890;"></div>
<div style="left:1004px;top:258px;width:14px;height:1px;background:#685850;"></div>
<div style="left:1017px;top:247px;width:1px;height:12px;background:#685850;"></div>
<div style="left:1007px;top:255px;width:6px;height:2px;background:#000;"></div>
<div style="left:1019px;top:246px;width:16px;height:14px;background:#a89890;"></div>
<div style="left:1019px;top:246px;width:16px;height:1px;background:#d8d0c8;"></div>
<div style="left:1019px;top:246px;width:1px;height:14px;background:#d8d0c8;"></div>
<div style="left:1019px;top:259px;width:16px;height:1px;background:#000;"></div>
<div style="left:1034px;top:246px;width:1px;height:14px;background:#000;"></div>
<div style="left:1020px;top:247px;width:14px;height:1px;background:#a89890;"></div>
<div style="left:1020px;top:247px;width:1px;height:12px;background:#a89890;"></div>
<div style="left:1020px;top:258px;width:14px;height:1px;background:#685850;"></div>
<div style="left:1033px;top:247px;width:1px;height:12px;background:#685850;"></div>
<div style="left:1022px;top:248px;width:9px;height:9px;border:1px solid #000;border-top-width:2px"></div>
<div style="left:1037px;top:246px;width:16px;height:14px;background:#a89890;"></div>
<div style="left:1037px;top:246px;width:16px;height:1px;background:#d8d0c8;"></div>
<div style="left:1037px;top:246px;width:1px;height:14px;background:#d8d0c8;"></div>
<div style="left:1037px;top:259px;width:16px;height:1px;background:#000;"></div>
<div style="left:1052px;top:246px;width:1px;height:14px;background:#000;"></div>
<div style="left:1038px;top:247px;width:14px;height:1px;background:#a89890;"></div>
<div style="left:1038px;top:247px;width:1px;height:12px;background:#a89890;"></div>
<div style="left:1038px;top:258px;width:14px;height:1px;background:#685850;"></div>
<div style="left:1051px;top:247px;width:1px;height:12px;background:#685850;"></div>
<svg style="left:1041px;top:249px" width="8" height="7" viewBox="0 0 8 7"><path d="M0.5 0 L7.5 7 M7.5 0 L0.5 7" stroke="#000" stroke-width="1.7" fill="none"/></svg>
<div class="t n" style="left:300px;top:263px;font-size:13px;letter-spacing:0.3px"><u>F</u>ile</div>
<div class="t n" style="left:340px;top:263px;font-size:13px;letter-spacing:0.3px"><u>A</u>nalyze</div>
<div class="t n" style="left:404px;top:263px;font-size:13px;letter-spacing:0.3px"><u>M</u>ode</div>
<div class="t n" style="left:460px;top:263px;font-size:13px;letter-spacing:0.3px"><u>V</u>iew</div>
<div class="t n" style="left:508px;top:263px;font-size:13px;letter-spacing:0.3px"><u>O</u>ptions</div>
<div class="t n" style="left:994px;top:263px;font-size:13px;letter-spacing:0.3px"><u>H</u>elp</div>
<div style="left:292px;top:282px;width:763px;height:1px;background:#685850;"></div>
<div style="left:292px;top:283px;width:763px;height:1px;background:#d8d0c8;"></div>
<div style="left:387px;top:284px;width:1px;height:24px;background:#685850;"></div>
<div style="left:388px;top:284px;width:1px;height:24px;background:#d8d0c8;"></div>
<div style="left:531px;top:284px;width:1px;height:24px;background:#685850;"></div>
<div style="left:532px;top:284px;width:1px;height:24px;background:#d8d0c8;"></div>
<div style="left:297px;top:284px;width:86px;height:22px;background:#a89890;"></div>
<div style="left:297px;top:284px;width:86px;height:1px;background:#d8d0c8;"></div>
<div style="left:297px;top:284px;width:1px;height:22px;background:#d8d0c8;"></div>
<div style="left:297px;top:305px;width:86px;height:1px;background:#000;"></div>
<div style="left:382px;top:284px;width:1px;height:22px;background:#000;"></div>
<div style="left:298px;top:285px;width:84px;height:1px;background:#a89890;"></div>
<div style="left:298px;top:285px;width:1px;height:20px;background:#a89890;"></div>
<div style="left:298px;top:304px;width:84px;height:1px;background:#685850;"></div>
<div style="left:381px;top:285px;width:1px;height:20px;background:#685850;"></div>
<div class="t b" style="left:297px;top:286px;width:86px;text-align:center;font-size:14px;letter-spacing:0.4px"><u>R</u>un</div>
<div style="left:393px;top:284px;width:86px;height:22px;background:#a89890;"></div>
<div style="left:393px;top:284px;width:86px;height:1px;background:#d8d0c8;"></div>
<div style="left:393px;top:284px;width:1px;height:22px;background:#d8d0c8;"></div>
<div style="left:393px;top:305px;width:86px;height:1px;background:#000;"></div>
<div style="left:478px;top:284px;width:1px;height:22px;background:#000;"></div>
<div style="left:394px;top:285px;width:84px;height:1px;background:#a89890;"></div>
<div style="left:394px;top:285px;width:1px;height:20px;background:#a89890;"></div>
<div style="left:394px;top:304px;width:84px;height:1px;background:#685850;"></div>
<div style="left:477px;top:285px;width:1px;height:20px;background:#685850;"></div>
<div class="t b" style="left:393px;top:286px;width:86px;text-align:center;font-size:14px;letter-spacing:0.4px">Re<u>s</u>cale</div>
<div style="left:500px;top:285px;width:13px;height:20px;background:#b4a49c;"></div>
<div style="left:488px;top:285px;width:13px;height:21px;background:#a89890;"></div>
<div style="left:488px;top:285px;width:13px;height:1px;background:#d8d0c8;"></div>
<div style="left:488px;top:285px;width:1px;height:21px;background:#d8d0c8;"></div>
<div style="left:488px;top:305px;width:13px;height:1px;background:#000;"></div>
<div style="left:500px;top:285px;width:1px;height:21px;background:#000;"></div>
<div style="left:489px;top:286px;width:11px;height:1px;background:#a89890;"></div>
<div style="left:489px;top:286px;width:1px;height:19px;background:#a89890;"></div>
<div style="left:489px;top:304px;width:11px;height:1px;background:#685850;"></div>
<div style="left:499px;top:286px;width:1px;height:19px;background:#685850;"></div>
<div style="left:513px;top:285px;width:13px;height:21px;background:#a89890;"></div>
<div style="left:513px;top:285px;width:13px;height:1px;background:#d8d0c8;"></div>
<div style="left:513px;top:285px;width:1px;height:21px;background:#d8d0c8;"></div>
<div style="left:513px;top:305px;width:13px;height:1px;background:#000;"></div>
<div style="left:525px;top:285px;width:1px;height:21px;background:#000;"></div>
<div style="left:514px;top:286px;width:11px;height:1px;background:#a89890;"></div>
<div style="left:514px;top:286px;width:1px;height:19px;background:#a89890;"></div>
<div style="left:514px;top:304px;width:11px;height:1px;background:#685850;"></div>
<div style="left:524px;top:286px;width:1px;height:19px;background:#685850;"></div>
<svg style="left:491px;top:291px" width="6" height="9" viewBox="0 0 6 9"><path d="M5.5 1.5 L5.5 8.5 L1.5 5 Z" fill="#d8d0c8"/><path d="M4.5 0.5 L4.5 7.5 L0.5 4 Z" fill="#685850"/></svg>
<svg style="left:517px;top:291px" width="6" height="9" viewBox="0 0 6 9"><path d="M1.5 1.5 L1.5 8.5 L5.5 5 Z" fill="#d8d0c8"/><path d="M0.5 0.5 L0.5 7.5 L4.5 4 Z" fill="#685850"/></svg>
<div style="left:292px;top:308px;width:763px;height:1px;background:#685850;"></div>
<div style="left:292px;top:309px;width:763px;height:1px;background:#d8d0c8;"></div>
<div style="left:292px;top:312px;width:763px;height:465px;background:#c0c0c0;"></div>
<div style="left:668px;top:428px;width:387px;height:138px;background:#a89890;"></div>
<div style="left:669px;top:428px;width:94px;height:54px;background:#c0c0c0;"></div>
<div style="left:669px;top:428px;width:94px;height:1px;background:#685850;"></div>
<div style="left:669px;top:428px;width:1px;height:54px;background:#685850;"></div>
<div style="left:669px;top:481px;width:94px;height:1px;background:#d8d0c8;"></div>
<div style="left:762px;top:428px;width:1px;height:54px;background:#d8d0c8;"></div>
<div style="left:670px;top:429px;width:92px;height:1px;background:#000;"></div>
<div style="left:670px;top:429px;width:1px;height:52px;background:#000;"></div>
<div style="left:670px;top:480px;width:92px;height:1px;background:#a89890;"></div>
<div style="left:761px;top:429px;width:1px;height:52px;background:#a89890;"></div>
<div style="left:671px;top:430px;width:90px;height:16px;background:#284848;"></div>
<div class="t b" style="left:673px;top:430px;color:#d8d0c8">3.644</div>
<div class="t b" style="left:673px;top:446px;color:#000080">5.628</div>
<div class="t b" style="left:673px;top:462px;color:#000080">6.560</div>
<div style="left:768px;top:428px;width:286px;height:54px;background:#c0c0c0;"></div>
<div style="left:768px;top:428px;width:286px;height:1px;background:#685850;"></div>
<div style="left:768px;top:428px;width:1px;height:54px;background:#685850;"></div>
<div style="left:768px;top:481px;width:286px;height:1px;background:#d8d0c8;"></div>
<div style="left:1053px;top:428px;width:1px;height:54px;background:#d8d0c8;"></div>
<div style="left:769px;top:429px;width:284px;height:1px;background:#000;"></div>
<div style="left:769px;top:429px;width:1px;height:52px;background:#000;"></div>
<div style="left:769px;top:480px;width:284px;height:1px;background:#a89890;"></div>
<div style="left:1052px;top:429px;width:1px;height:52px;background:#a89890;"></div>
<div style="left:770px;top:430px;width:282px;height:16px;background:#284848;"></div>
<div class="t b" style="left:772px;top:430px;color:#d8d0c8">Dimethyl methylphosphonate (DMMP)</div>
<div class="t b" style="left:772px;top:446px;color:#000080">Diethyl methylphosphonate (DEMP)</div>
<div class="t b" style="left:772px;top:462px;color:#000080">Diisopropyl methylphosphonate (DIMP)</div>
<div class="t b" style="left:676px;top:485px;letter-spacing:0">Eluent:</div>
<div class="t b" style="left:876px;top:485px;letter-spacing:0">Match:</div>
<div style="left:669px;top:503px;width:195px;height:61px;background:#c0c0c0;"></div>
<div style="left:669px;top:503px;width:195px;height:1px;background:#685850;"></div>
<div style="left:669px;top:503px;width:1px;height:61px;background:#685850;"></div>
<div style="left:669px;top:563px;width:195px;height:1px;background:#d8d0c8;"></div>
<div style="left:863px;top:503px;width:1px;height:61px;background:#d8d0c8;"></div>
<div style="left:670px;top:504px;width:193px;height:1px;background:#000;"></div>
<div style="left:670px;top:504px;width:1px;height:59px;background:#000;"></div>
<div style="left:670px;top:562px;width:193px;height:1px;background:#a89890;"></div>
<div style="left:862px;top:504px;width:1px;height:59px;background:#a89890;"></div>
<div class="t b" style="left:673px;top:505px;color:#000080;letter-spacing:0;word-spacing:-0.5px">Purity = 50%</div>
<div class="t b" style="left:673px;top:521px;color:#000080;letter-spacing:0;word-spacing:-0.5px">Amount = 0.351%</div>
<div class="t b" style="left:673px;top:537px;color:#000080;letter-spacing:0.1px">Detect. Limit = 14%</div>
<div style="left:848px;top:505px;width:1px;height:57px;background:#000;"></div>
<div style="left:849px;top:505px;width:13px;height:57px;background-color:#d8d0c8;background-image:linear-gradient(45deg,#a89890 25%,transparent 25%,transparent 75%,#a89890 75%),linear-gradient(45deg,#a89890 25%,transparent 25%,transparent 75%,#a89890 75%);background-size:2px 2px;background-position:0 0,1px 1px;"></div>
<div style="left:849px;top:505px;width:13px;height:11px;background:#a89890;"></div>
<div style="left:849px;top:505px;width:13px;height:1px;background:#d8d0c8;"></div>
<div style="left:849px;top:505px;width:1px;height:11px;background:#d8d0c8;"></div>
<div style="left:849px;top:515px;width:13px;height:1px;background:#685850;"></div>
<div style="left:861px;top:505px;width:1px;height:11px;background:#685850;"></div>
<div style="left:849px;top:516px;width:13px;height:1px;background:#000;"></div>
<svg style="left:853px;top:509px" width="5" height="3" viewBox="0 0 5 3" shape-rendering="crispEdges"><path d="M2 0h1v1h1v1h1v1h-5v-1h1v-1h1z" fill="#000"/></svg>
<div style="left:849px;top:551px;width:13px;height:11px;background:#a89890;"></div>
<div style="left:849px;top:551px;width:13px;height:1px;background:#d8d0c8;"></div>
<div style="left:849px;top:551px;width:1px;height:11px;background:#d8d0c8;"></div>
<div style="left:849px;top:561px;width:13px;height:1px;background:#685850;"></div>
<div style="left:861px;top:551px;width:1px;height:11px;background:#685850;"></div>
<div style="left:849px;top:550px;width:13px;height:1px;background:#000;"></div>
<svg style="left:853px;top:555px" width="5" height="3" viewBox="0 0 5 3" shape-rendering="crispEdges"><path d="M0 0h5v1h-1v1h-1v1h-1v-1h-1v-1h-1z" fill="#000"/></svg>
<div style="left:849px;top:517px;width:13px;height:12px;background:#a89890;"></div>
<div style="left:849px;top:517px;width:13px;height:1px;background:#d8d0c8;"></div>
<div style="left:849px;top:517px;width:1px;height:12px;background:#d8d0c8;"></div>
<div style="left:849px;top:528px;width:13px;height:1px;background:#685850;"></div>
<div style="left:861px;top:517px;width:1px;height:12px;background:#685850;"></div>
<div style="left:849px;top:529px;width:13px;height:1px;background:#000;"></div>
<div style="left:873px;top:503px;width:179px;height:61px;background:#c0c0c0;"></div>
<div style="left:873px;top:503px;width:179px;height:1px;background:#685850;"></div>
<div style="left:873px;top:503px;width:1px;height:61px;background:#685850;"></div>
<div style="left:873px;top:563px;width:179px;height:1px;background:#d8d0c8;"></div>
<div style="left:1051px;top:503px;width:1px;height:61px;background:#d8d0c8;"></div>
<div style="left:874px;top:504px;width:177px;height:1px;background:#000;"></div>
<div style="left:874px;top:504px;width:1px;height:59px;background:#000;"></div>
<div style="left:874px;top:562px;width:177px;height:1px;background:#a89890;"></div>
<div style="left:1050px;top:504px;width:1px;height:59px;background:#a89890;"></div>
<div class="t b" style="left:876px;top:505px;color:#000080;letter-spacing:0.2px">Net = 90</div>
<div class="t b" style="left:876px;top:521px;color:#000080;letter-spacing:0.2px">Reverse = 97</div>
<div class="t b" style="left:876px;top:537px;color:#000080;letter-spacing:0.2px">Simple = 90</div>
<div style="left:1036px;top:505px;width:1px;height:57px;background:#000;"></div>
<div style="left:1037px;top:505px;width:13px;height:57px;background-color:#d8d0c8;background-image:linear-gradient(45deg,#a89890 25%,transparent 25%,transparent 75%,#a89890 75%),linear-gradient(45deg,#a89890 25%,transparent 25%,transparent 75%,#a89890 75%);background-size:2px 2px;background-position:0 0,1px 1px;"></div>
<div style="left:1037px;top:505px;width:13px;height:11px;background:#a89890;"></div>
<div style="left:1037px;top:505px;width:13px;height:1px;background:#d8d0c8;"></div>
<div style="left:1037px;top:505px;width:1px;height:11px;background:#d8d0c8;"></div>
<div style="left:1037px;top:515px;width:13px;height:1px;background:#685850;"></div>
<div style="left:1049px;top:505px;width:1px;height:11px;background:#685850;"></div>
<div style="left:1037px;top:516px;width:13px;height:1px;background:#000;"></div>
<svg style="left:1041px;top:509px" width="5" height="3" viewBox="0 0 5 3" shape-rendering="crispEdges"><path d="M2 0h1v1h1v1h1v1h-5v-1h1v-1h1z" fill="#000"/></svg>
<div style="left:1037px;top:551px;width:13px;height:11px;background:#a89890;"></div>
<div style="left:1037px;top:551px;width:13px;height:1px;background:#d8d0c8;"></div>
<div style="left:1037px;top:551px;width:1px;height:11px;background:#d8d0c8;"></div>
<div style="left:1037px;top:561px;width:13px;height:1px;background:#685850;"></div>
<div style="left:1049px;top:551px;width:1px;height:11px;background:#685850;"></div>
<div style="left:1037px;top:550px;width:13px;height:1px;background:#000;"></div>
<svg style="left:1041px;top:555px" width="5" height="3" viewBox="0 0 5 3" shape-rendering="crispEdges"><path d="M0 0h5v1h-1v1h-1v1h-1v-1h-1v-1h-1z" fill="#000"/></svg>
<div style="left:1037px;top:517px;width:13px;height:12px;background:#a89890;"></div>
<div style="left:1037px;top:517px;width:13px;height:1px;background:#d8d0c8;"></div>
<div style="left:1037px;top:517px;width:1px;height:12px;background:#d8d0c8;"></div>
<div style="left:1037px;top:528px;width:13px;height:1px;background:#685850;"></div>
<div style="left:1049px;top:517px;width:1px;height:12px;background:#685850;"></div>
<div style="left:1037px;top:529px;width:13px;height:1px;background:#000;"></div>
<svg style="left:292px;top:311px;will-change:transform" width="763" height="466" viewBox="292 311 763 466">
<g shape-rendering="crispEdges">
<rect x="292" y="427" width="763" height="1" fill="#000"/>
<rect x="292" y="566" width="763" height="1" fill="#000"/>
<rect x="292" y="672" width="763" height="1" fill="#000"/>
<rect x="292" y="428" width="376" height="1" fill="#e0e0e0"/>
<rect x="292" y="567" width="763" height="1" fill="#e0e0e0"/>
<rect x="292" y="673" width="763" height="1" fill="#e0e0e0"/>
<rect x="329" y="340" width="675" height="65" fill="#808080"/>
<rect x="321" y="340" width="683" height="1" fill="#000"/>
<rect x="329" y="341" width="675" height="1" fill="#00f"/>
<rect x="328" y="341" width="2" height="63" fill="#00f"/>
<rect x="1002" y="341" width="1" height="63" fill="#00f"/><rect x="1003" y="340" width="1" height="65" fill="#000"/>
<rect x="321" y="404" width="683" height="1" fill="#000"/>
<rect x="324" y="356" width="5" height="1" fill="#000"/>
<rect x="321" y="371" width="8" height="1" fill="#000"/>
<rect x="324" y="388" width="5" height="1" fill="#000"/>
<rect x="376" y="405" width="1" height="5" fill="#000"/>
<rect x="424" y="405" width="1" height="5" fill="#000"/>
<rect x="472" y="405" width="1" height="5" fill="#000"/>
<rect x="521" y="405" width="1" height="5" fill="#000"/>
<rect x="569" y="405" width="1" height="5" fill="#000"/>
<rect x="617" y="405" width="1" height="5" fill="#000"/>
<rect x="665" y="405" width="1" height="5" fill="#000"/>
<rect x="713" y="405" width="1" height="5" fill="#000"/>
<rect x="761" y="405" width="1" height="5" fill="#000"/>
<rect x="810" y="405" width="1" height="5" fill="#000"/>
<rect x="858" y="405" width="1" height="5" fill="#000"/>
<rect x="906" y="405" width="1" height="5" fill="#000"/>
<rect x="954" y="405" width="1" height="5" fill="#000"/>
<rect x="1002" y="405" width="1" height="5" fill="#000"/>
<path d="M336 336 L345 336 L340.5 340.5 Z" fill="#f00"/>
<path d="M380 336 L389 336 L384.5 340.5 Z" fill="#000080"/><path d="M401 336 L410 336 L405.5 340.5 Z" fill="#000080"/>
<path d="M336 412.5 L345 412.5 L340.5 408 Z" fill="#f00"/>
</g>
<polyline fill="none" stroke="#d0c8c0" stroke-width="1.1" points="329,387 331,389 333,392 335,394 337,396 339,397 341,396 342,393 343,396 345,399 346,400.2 347.5,399.9 349.0,400.8 350.5,399.7 352.0,400.6 353.5,400.3 355.0,399.7 356.5,400.5 358.0,399.7 359.5,400.4 361.0,399.7 362.5,399.8 364.0,400.4 365.5,401.1 367.0,399.8 368.5,400.0 370.0,400.7 371.5,401.3 373.0,400.6 374.5,400.3 376.0,401.4 377.5,399.7 379.0,401.1 380.5,400.1 382.0,399.9 383.5,399.8 385.0,396.5 386.5,401.1 388.0,399.9 389.5,400.6 391.0,400.8 392.5,400.3 394.0,400.6 395.5,399.7 397.0,399.7 398.5,400.0 400.0,400.8 401.5,400.4 403.0,400.2 404.5,400.7 406.0,396.5 407.5,400.1 409.0,401.0 410.5,400.9 412.0,400.0 413.5,400.6 415.0,400.5 416.5,394 418.0,394 419.5,400.1 421.0,401.4 422.5,399.8 424.0,400.4 425.5,401.0 427.0,399.9 428.5,400.5 430.0,399.7 431.5,400.8 433.0,401.0 434.5,400.6 436.0,401.2 437.5,400.2 439.0,400.9 440.5,400.7 442.0,400.6 443.5,400.4 445.0,401.1 446.5,401.3 448.0,400.5 449.5,400.8 451.0,399.7 452.5,400.9 454.0,400.8 455.5,401.4 457.0,401.1 458.5,400.1 460.0,400.3 461.5,400.8 463.0,399.6 464.5,400.4 466.0,399.9 467.5,399.8 469.0,399.7 470.5,401.0 472.0,399.8 473.5,400.0 475.0,400.3 476.5,401.2 478.0,399.7 479.5,400.4 481.0,400.6 482.5,401.2 484.0,401.1 485.5,401.2 487.0,400.1 488.5,400.3 490.0,400.2 491.5,401.2 493.0,401.3 494.5,399.9 496.0,399.9 497.5,400.0 499.0,400.0 500.5,400.5 502.0,400.7 503.5,400.1 505.0,399.6 506.5,400.4 508.0,400.3 509.5,400.6 511.0,401.3 512.5,400.8 514.0,400.5 515.5,400.7 517.0,400.8 518.5,399.7 520.0,401.2 521.5,401.0 523.0,401.2 524.5,401.0 526.0,400.3 527.5,400.3 529.0,399.8 530.5,400.7 532.0,399.7 533.5,399.7 535.0,400.0 536.5,399.9 538.0,400.2 539.5,399.7 541.0,399.6 542.5,399.9 544.0,399.8 545.5,400.3 547.0,399.6 548.5,401.2 550.0,400.7 551.5,399.9 553.0,400.1 554.5,400.2 556.0,400.3 557.5,399.8 559.0,401.1 560.5,401.4 562.0,400.4 563.5,400.5 565.0,399.8 566.5,399.8 568.0,400.2 569.5,400.1 571.0,401.1 572.5,399.9 574.0,399.6 575.5,401.3 577.0,400.6 578.5,399.9 580.0,400.6 581.5,399.6 583.0,400.6 584.5,401.4 586.0,401.2 587.5,400.9 589.0,400.1 590.5,400.3 592.0,399.9 593.5,401.0 595.0,400.6 596.5,401.0 598.0,400.2 599.5,400.0 601.0,401.1 602.5,401.4 604.0,401.1 605.5,401.1 607.0,401.1 608.5,400.9 610.0,400.0 611.5,400.5 613.0,400.2 614.5,399.7 616.0,399.7 617.5,400.1 619.0,400.1 620.5,400.8 622.0,401.3 623.5,400.4 625.0,401.3 626.5,401.4 628.0,401.3 629.5,400.3 631.0,400.0 632.5,400.0 634.0,400.0 635.5,400.0 637.0,400.7 638.5,401.2 640.0,401.1 641.5,400.5 643.0,400.8 644.5,401.0 646.0,399.8 647.5,400.8 649.0,401.2 650.5,401.0 652.0,401.0 653.5,400.5 655.0,399.9 656.5,401.0 658.0,400.2 659.5,401.0 661.0,401.3 662.5,400.3 664.0,400.3 665.5,401.3 667.0,400.9 668.5,399.9 670.0,399.8 671.5,399.9 673.0,401.2 674.5,401.1 676.0,399.9 677.5,401.1 679.0,401.4 680.5,400.8 682.0,400.2 683.5,400.6 685.0,399.8 686.5,399.6 688.0,401.3 689.5,400.8 691.0,400.5 692.5,401.3 694.0,400.4 695.5,401.2 697.0,401.1 698.5,400.0 700.0,400.1 701.5,400.1 703.0,400.0 704.5,400.7 706.0,400.1 707.5,400.4 709.0,399.8 710.5,401.2 712.0,400.2 713.5,400.4 715.0,400.7 716.5,401.2 718.0,400.4 719.5,401.3 721.0,400.5 722.5,400.6 724.0,400.5 725.5,399.6 727.0,400.4 728.5,399.9 730.0,399.6 731.5,401.0 733.0,399.9 734.5,400.5 736.0,400.9 737.5,400.6 739.0,400.2 740.5,400.5 742.0,400.6 743.5,401.0 745.0,399.8 746.5,400.6 748.0,400.0 749.5,400.1 751.0,401.0 752.5,400.5 754.0,400.6 755.5,401.0 757.0,401.2 758.5,400.4 760.0,400.7 761.5,400.5 763.0,400.5 764.5,400.8 766.0,400.4 767.5,400.6 769.0,400.5 770.5,401.3 772.0,400.9 773.5,401.2"/>
<path d="M334 395.5 L340 396.5 L341.5 391 L344 396 L346 399" stroke="#000" stroke-width="1" fill="none"/>
<path d="M375 400 L382 398" stroke="#000" stroke-width="1" fill="none"/>
<polyline fill="none" stroke="#fff" stroke-width="1.2" points="774,401 775,347 776,392 777,397 778,399 779,401.0 780.5,399.9 782.0,400.4 783.5,401.0 785.0,400.8 786.5,399.7 788.0,399.7 789.5,400.2 791.0,399.6 792.5,399.9 794.0,399.6 795.5,400.6 797.0,400.8 798.5,400.9 800.0,399.7 801.5,400.6 803.0,400.6 804.5,399.7 806.0,400.9 807.5,401.0 809.0,399.9 810.5,401.0 812.0,400.1 813.5,400.3 815.0,401.1 816.5,400.8 818.0,399.8 819.5,400.2 821.0,400.3 822.5,400.0 824.0,399.8 825.5,400.0 827.0,400.7 828.5,399.5 830.0,400.4 831.5,400.2 833.0,399.5 834.5,400.0 836.0,400.5 837.5,400.3 839.0,399.6 840.5,401.1 842.0,400.8 844.5,398 845.3,340 846.3,385 847.5,393 849,396 851,398 853,399 855,400.6 856.5,399.1 858.0,399.4 859.5,399.0 861.0,400.3 862.5,399.4 864.0,399.1 865.5,399.6 867.0,400.5 868.5,400.3 870.0,399.3 871.5,399.0 873.0,400.4 874.5,399.8 876.0,400.0 877.5,398.8 879.0,398.8 880.5,399.9 882.0,399.3 883.5,398.7 885.0,400.2 886.5,399.6 888.0,399.9 889.5,398.5 891.0,399.9 892.5,398.4 894.0,399.8 895.5,399.0 897.0,398.7 898.5,399.1 900.0,399.7 901.5,398.4 903.0,398.1 904.5,398.8 906.0,398.2 907.5,397.9 909.0,397.9 910.5,397.6 912.0,397.8 913.5,398.0 915.0,397.9 916.5,398.6 918.0,397.7 919.5,398.0 921.0,397.3 922.5,397.5 924.0,396.9 925.5,397.2 927.0,396.7 928.5,397.9 930.0,397.4 931.5,396.7 933.0,397.1 934.5,397.8 936.0,396.2 937.5,397.4 939.0,396.6 940.5,396.6 942.0,397.1 943.5,396.2 945.0,396.3 946.5,396.5 948.0,396.9 949.5,395.6 951.0,396.4 952.5,396.0 954.0,395.8 955.5,395.2 957.0,395.0 958.5,394.3 960.0,394.3 961.5,394.1 963.0,395.1 964.5,394.1 966.0,393.8 967.5,393.5 969.0,394.7 970.5,394.6 972.0,394.1 973.5,393.3 975.0,393.0 976.5,393.0 978.0,393.1 979.5,392.4 981.0,392.8 982.5,392.3 984.0,393.4 985.5,393.2 987,391 989,388 991,381 992.5,375 993.5,374 995,381 997,387 999,389 1001,388 1002.5,389"/>
<g shape-rendering="crispEdges"><rect x="1009.5" y="313.5" width="41" height="23" rx="1.5" fill="none" stroke="#fff"/></g>
<path d="M1008.5 331 L1008.5 338 L1007 350 L1003.5 398" stroke="#fff" stroke-width="1.1" stroke-dasharray="5 3" fill="none"/>
<text x="1030" y="331" text-anchor="middle" fill="#fff" style="font-size:14px;letter-spacing:0.5px">TIC</text>
<text x="293" y="327" text-anchor="start" fill="#000" style="letter-spacing:0.4px">Abundance</text>
<text x="372" y="327" text-anchor="start" fill="#b8a8a0"  textLength="45" lengthAdjust="spacing">[0-446]</text>
<text x="377" y="326" text-anchor="start" fill="#fff" style="font-style:italic;font-weight:normal;font-size:13px" opacity="0.8" textLength="36" lengthAdjust="spacing">0-446</text>
<text x="321.5" y="346" text-anchor="end" fill="#000" style="letter-spacing:0.55px">100</text>
<text x="321.5" y="377" text-anchor="end" fill="#000" style="letter-spacing:0.55px">50</text>
<text x="321.5" y="410" text-anchor="end" fill="#000" style="letter-spacing:0.55px">0</text>
<text x="294" y="423.7" text-anchor="start" fill="#000"  textLength="35" lengthAdjust="spacing">Time:</text>
<text x="375.5" y="423.7" text-anchor="middle" fill="#000" style="letter-spacing:0.55px">5.19</text>
<text x="423.7" y="423.7" text-anchor="middle" fill="#000" style="letter-spacing:0.55px">7.35</text>
<text x="471.8" y="423.7" text-anchor="middle" fill="#000" style="letter-spacing:0.55px">9.50</text>
<text x="520.0" y="423.7" text-anchor="middle" fill="#000" style="letter-spacing:0.55px">11.66</text>
<text x="568.2" y="423.7" text-anchor="middle" fill="#000" style="letter-spacing:0.55px">13.82</text>
<text x="616.4" y="423.7" text-anchor="middle" fill="#000" style="letter-spacing:0.55px">15.97</text>
<text x="664.5" y="423.7" text-anchor="middle" fill="#000" style="letter-spacing:0.55px">18.13</text>
<text x="712.7" y="423.7" text-anchor="middle" fill="#000" style="letter-spacing:0.55px">20.29</text>
<text x="760.9" y="423.7" text-anchor="middle" fill="#000" style="letter-spacing:0.55px">22.44</text>
<text x="809.0" y="423.7" text-anchor="middle" fill="#000" style="letter-spacing:0.55px">24.60</text>
<text x="857.2" y="423.7" text-anchor="middle" fill="#000" style="letter-spacing:0.55px">26.75</text>
<text x="905.4" y="423.7" text-anchor="middle" fill="#000" style="letter-spacing:0.55px">28.91</text>
<text x="953.5" y="423.7" text-anchor="middle" fill="#000" style="letter-spacing:0.55px">31.07</text>
<text x="1001.7" y="423.7" text-anchor="middle" fill="#000" style="letter-spacing:0.55px">33.22</text>
<g shape-rendering="crispEdges">
<rect x="329" y="454" width="296" height="89" fill="#a0a0a0"/>
<rect x="323" y="454" width="302" height="1" fill="#000"/><rect x="323" y="542" width="302" height="1" fill="#000"/>
<rect x="328" y="454" width="1" height="89" fill="#000"/><rect x="624" y="454" width="1" height="89" fill="#000"/>
<rect x="323" y="476" width="6" height="1" fill="#000"/>
<rect x="323" y="498" width="6" height="1" fill="#000"/>
<rect x="323" y="520" width="6" height="1" fill="#000"/>
<rect x="355" y="543" width="1" height="3" fill="#000"/>
<rect x="382" y="543" width="1" height="5" fill="#000"/>
<rect x="409" y="543" width="1" height="3" fill="#000"/>
<rect x="436" y="543" width="1" height="5" fill="#000"/>
<rect x="463" y="543" width="1" height="3" fill="#000"/>
<rect x="490" y="543" width="1" height="5" fill="#000"/>
<rect x="517" y="543" width="1" height="3" fill="#000"/>
<rect x="544" y="543" width="1" height="5" fill="#000"/>
<rect x="571" y="543" width="1" height="3" fill="#000"/>
<rect x="598" y="543" width="1" height="5" fill="#000"/>
<path d="M405 551 L414 551 L409.5 546.5 Z" fill="#f00"/>
</g>
<path d="M379 460 L382 456 L386 455 M390 456 L394 458 M399 461 L402 463 M406 465 L408 466 M552 480 L555 482" stroke="#000" stroke-width="1" fill="none"/>
<polyline fill="none" stroke="#d0c8c0" stroke-width="1" points="328.0,501.8 355.0,498.8 382.1,454.5 409.1,463.8 436.1,476.0 463.1,470.7 490.2,478.8 517.2,479.8 544.2,477.9 571.3,491.9 598.3,492.0"/>
<path d="M598.3 492.0 L626 438" stroke="#d0c8c0" stroke-width="1.1"  fill="none"/>
<polyline fill="none" stroke="#f00" stroke-width="1" points="328.0,542.5 355.0,513.2 382.1,459.3 409.1,469.1 436.1,487.9 463.1,487.1 490.2,492.3 517.2,500.2 544.2,505.0 571.3,502.5 598.3,511.0"/>
<path d="M598.3 511.0 L626 507" stroke="#f00" stroke-width="1.1" stroke-dasharray="5 4" fill="none"/>
<polyline fill="none" stroke="#00f" stroke-width="1" points="328.0,525.9 355.0,534.8 382.1,467.2 409.1,454.5 436.1,473.0 463.1,477.7 490.2,489.1 517.2,489.1 544.2,495.1 571.3,500.1 598.3,502.9"/>
<path d="M598.3 502.9 L626 484.5" stroke="#00f" stroke-width="1.1" stroke-dasharray="5 4" fill="none"/>
<polyline fill="none" stroke="#ff0" stroke-width="1" points="328.0,542.5 355.0,542.5 382.1,512.8 409.1,517.0 436.1,514.8 463.1,514.8 490.2,521.3 517.2,530.0 544.2,528.2 571.3,525.3 598.3,530.0"/>
<path d="M598.3 530.0 L626 530.5" stroke="#ff0" stroke-width="1.1" stroke-dasharray="5 4" fill="none"/>
<circle cx="328.0" cy="501.8" r="3.5" fill="#d0c8c0"/>
<circle cx="355.0" cy="498.8" r="3.5" fill="#d0c8c0"/>
<circle cx="382.1" cy="454.5" r="3.5" fill="#d0c8c0"/>
<circle cx="409.1" cy="463.8" r="3.5" fill="#d0c8c0"/>
<circle cx="436.1" cy="476.0" r="3.5" fill="#d0c8c0"/>
<circle cx="463.1" cy="470.7" r="3.5" fill="#d0c8c0"/>
<circle cx="490.2" cy="478.8" r="3.5" fill="#b4a8a0"/>
<rect x="486" y="478" width="8" height="1" fill="#d0c8c0"/>
<circle cx="517.2" cy="479.8" r="3.5" fill="#b4a8a0"/>
<rect x="513" y="479" width="8" height="1" fill="#d0c8c0"/>
<circle cx="544.2" cy="477.9" r="3.5" fill="#b4a8a0"/>
<rect x="540" y="477" width="8" height="1" fill="#d0c8c0"/>
<circle cx="571.3" cy="491.9" r="3.5" fill="#b4a8a0"/>
<circle cx="328.0" cy="542.5" r="3.5" fill="#f00"/>
<circle cx="355.0" cy="513.2" r="3.5" fill="#f00"/>
<circle cx="382.1" cy="459.3" r="3.5" fill="#f00"/>
<circle cx="409.1" cy="469.1" r="3.5" fill="#f00"/>
<circle cx="436.1" cy="487.9" r="3.5" fill="#f00"/>
<circle cx="463.1" cy="487.1" r="3.5" fill="#f00"/>
<circle cx="490.2" cy="492.3" r="3.5" fill="#f00"/>
<circle cx="517.2" cy="500.2" r="3.5" fill="#f00"/>
<circle cx="544.2" cy="505.0" r="3.5" fill="#f00"/>
<circle cx="571.3" cy="502.5" r="3.5" fill="#f00"/>
<circle cx="598.3" cy="511.0" r="3.5" fill="#f00"/>
<circle cx="328.0" cy="525.9" r="3.5" fill="#00f"/>
<circle cx="355.0" cy="534.8" r="3.5" fill="#00f"/>
<circle cx="382.1" cy="467.2" r="3.5" fill="#00f"/>
<circle cx="409.1" cy="454.5" r="3.5" fill="#00f"/>
<circle cx="436.1" cy="473.0" r="3.5" fill="#00f"/>
<circle cx="463.1" cy="477.7" r="3.5" fill="#00f"/>
<circle cx="490.2" cy="489.1" r="3.5" fill="#00f"/>
<circle cx="517.2" cy="489.1" r="3.5" fill="#00f"/>
<circle cx="544.2" cy="495.1" r="3.5" fill="#00f"/>
<circle cx="571.3" cy="500.1" r="3.5" fill="#00f"/>
<circle cx="598.3" cy="502.9" r="3.5" fill="#00f"/>
<circle cx="328.0" cy="542.5" r="3.5" fill="#ff0"/>
<circle cx="355.0" cy="542.5" r="3.5" fill="#ff0"/>
<circle cx="382.1" cy="512.8" r="3.5" fill="#ff0"/>
<circle cx="409.1" cy="517.0" r="3.5" fill="#ff0"/>
<circle cx="436.1" cy="514.8" r="3.5" fill="#ff0"/>
<circle cx="463.1" cy="514.8" r="3.5" fill="#ff0"/>
<circle cx="490.2" cy="521.3" r="3.5" fill="#ff0"/>
<circle cx="517.2" cy="530.0" r="3.5" fill="#ff0"/>
<circle cx="544.2" cy="528.2" r="3.5" fill="#ff0"/>
<circle cx="571.3" cy="525.3" r="3.5" fill="#ff0"/>
<circle cx="598.3" cy="530.0" r="3.5" fill="#ff0"/>
<circle cx="598.3" cy="492" r="2.6" stroke="#000" stroke-width="1.2" fill="#b4a8a0"/>
<g shape-rendering="crispEdges">
<rect x="625.5" y="429.5" width="41" height="23" fill="none" stroke="#d0c8c0"/>
<rect x="625.5" y="473.5" width="41" height="22" fill="none" stroke="#00f"/>
<rect x="625.5" y="496.5" width="41" height="22" fill="none" stroke="#f00"/>
<rect x="625.5" y="519.5" width="41" height="22" fill="none" stroke="#ff0"/>
</g>
<text x="646" y="447" text-anchor="middle" fill="#d6cec6" style="letter-spacing:0.5px">TIC</text>
<text x="646.5" y="490" text-anchor="middle" fill="#00f" style="letter-spacing:0.55px">94</text>
<text x="646.5" y="513" text-anchor="middle" fill="#f00" style="letter-spacing:0.55px">79</text>
<text x="646.5" y="536" text-anchor="middle" fill="#ff0" style="letter-spacing:0.55px">93</text>
<text x="293" y="445" text-anchor="start" fill="#000"  textLength="129" lengthAdjust="spacing">Abundance [19.0%]</text>
<text x="427" y="445" text-anchor="start" fill="#c8bcb4" style="letter-spacing:0.4px">[89.9]</text>
<text x="430" y="445" text-anchor="start" fill="#000" style="font-size:11px" opacity="0.7">:: . !</text>
<text x="321.5" y="460" text-anchor="end" fill="#000" style="letter-spacing:0.55px">100</text>
<text x="321.5" y="481" text-anchor="end" fill="#000" style="letter-spacing:0.55px">75</text>
<text x="321.5" y="503" text-anchor="end" fill="#000" style="letter-spacing:0.55px">50</text>
<text x="321.5" y="525" text-anchor="end" fill="#000" style="letter-spacing:0.55px">25</text>
<text x="321.5" y="548" text-anchor="end" fill="#000" style="letter-spacing:0.55px">0</text>
<text x="294" y="563" text-anchor="start" fill="#000"  textLength="35" lengthAdjust="spacing">Time:</text>
<text x="382.1" y="563" text-anchor="middle" fill="#000" style="letter-spacing:0.55px">3.64</text>
<text x="436.1" y="563" text-anchor="middle" fill="#000" style="letter-spacing:0.55px">3.67</text>
<text x="490.2" y="563" text-anchor="middle" fill="#000" style="letter-spacing:0.55px">3.70</text>
<text x="544.2" y="563" text-anchor="middle" fill="#000" style="letter-spacing:0.55px">3.73</text>
<text x="598.3" y="563" text-anchor="middle" fill="#000" style="letter-spacing:0.55px">3.76</text>
<g shape-rendering="crispEdges">
<rect x="329" y="589" width="696" height="60" fill="#808080"/>
<rect x="328" y="589" width="697" height="1" fill="#00f"/>
<rect x="328" y="589" width="2" height="59" fill="#00f"/>
<rect x="1023" y="589" width="1" height="59" fill="#00f"/><rect x="1024" y="589" width="1" height="60" fill="#000"/>
<rect x="321" y="648" width="704" height="1" fill="#000"/>
<rect x="324" y="638" width="5" height="1" fill="#000"/>
<rect x="321" y="629" width="8" height="1" fill="#000"/>
<rect x="324" y="619" width="5" height="1" fill="#000"/>
<rect x="321" y="610" width="8" height="1" fill="#000"/>
<rect x="336" y="649" width="1" height="5" fill="#000"/>
<rect x="345" y="649" width="1" height="2" fill="#000"/>
<rect x="353" y="649" width="1" height="2" fill="#000"/>
<rect x="362" y="649" width="1" height="2" fill="#000"/>
<rect x="371" y="649" width="1" height="2" fill="#000"/>
<rect x="379" y="649" width="1" height="5" fill="#000"/>
<rect x="388" y="649" width="1" height="2" fill="#000"/>
<rect x="397" y="649" width="1" height="2" fill="#000"/>
<rect x="405" y="649" width="1" height="2" fill="#000"/>
<rect x="414" y="649" width="1" height="2" fill="#000"/>
<rect x="423" y="649" width="1" height="5" fill="#000"/>
<rect x="431" y="649" width="1" height="2" fill="#000"/>
<rect x="440" y="649" width="1" height="2" fill="#000"/>
<rect x="449" y="649" width="1" height="2" fill="#000"/>
<rect x="457" y="649" width="1" height="2" fill="#000"/>
<rect x="466" y="649" width="1" height="5" fill="#000"/>
<rect x="474" y="649" width="1" height="2" fill="#000"/>
<rect x="483" y="649" width="1" height="2" fill="#000"/>
<rect x="492" y="649" width="1" height="2" fill="#000"/>
<rect x="500" y="649" width="1" height="2" fill="#000"/>
<rect x="509" y="649" width="1" height="5" fill="#000"/>
<rect x="518" y="649" width="1" height="2" fill="#000"/>
<rect x="526" y="649" width="1" height="2" fill="#000"/>
<rect x="535" y="649" width="1" height="2" fill="#000"/>
<rect x="544" y="649" width="1" height="2" fill="#000"/>
<rect x="552" y="649" width="1" height="5" fill="#000"/>
<rect x="561" y="649" width="1" height="2" fill="#000"/>
<rect x="570" y="649" width="1" height="2" fill="#000"/>
<rect x="578" y="649" width="1" height="2" fill="#000"/>
<rect x="587" y="649" width="1" height="2" fill="#000"/>
<rect x="596" y="649" width="1" height="5" fill="#000"/>
<rect x="604" y="649" width="1" height="2" fill="#000"/>
<rect x="613" y="649" width="1" height="2" fill="#000"/>
<rect x="622" y="649" width="1" height="2" fill="#000"/>
<rect x="630" y="649" width="1" height="2" fill="#000"/>
<rect x="639" y="649" width="1" height="5" fill="#000"/>
<rect x="648" y="649" width="1" height="2" fill="#000"/>
<rect x="656" y="649" width="1" height="2" fill="#000"/>
<rect x="665" y="649" width="1" height="2" fill="#000"/>
<rect x="674" y="649" width="1" height="2" fill="#000"/>
<rect x="682" y="649" width="1" height="5" fill="#000"/>
<rect x="691" y="649" width="1" height="2" fill="#000"/>
<rect x="700" y="649" width="1" height="2" fill="#000"/>
<rect x="708" y="649" width="1" height="2" fill="#000"/>
<rect x="717" y="649" width="1" height="2" fill="#000"/>
<rect x="725" y="649" width="1" height="5" fill="#000"/>
<rect x="734" y="649" width="1" height="2" fill="#000"/>
<rect x="743" y="649" width="1" height="2" fill="#000"/>
<rect x="751" y="649" width="1" height="2" fill="#000"/>
<rect x="760" y="649" width="1" height="2" fill="#000"/>
<rect x="769" y="649" width="1" height="5" fill="#000"/>
<rect x="777" y="649" width="1" height="2" fill="#000"/>
<rect x="786" y="649" width="1" height="2" fill="#000"/>
<rect x="795" y="649" width="1" height="2" fill="#000"/>
<rect x="803" y="649" width="1" height="2" fill="#000"/>
<rect x="812" y="649" width="1" height="5" fill="#000"/>
<rect x="821" y="649" width="1" height="2" fill="#000"/>
<rect x="829" y="649" width="1" height="2" fill="#000"/>
<rect x="838" y="649" width="1" height="2" fill="#000"/>
<rect x="847" y="649" width="1" height="2" fill="#000"/>
<rect x="855" y="649" width="1" height="5" fill="#000"/>
<rect x="864" y="649" width="1" height="2" fill="#000"/>
<rect x="873" y="649" width="1" height="2" fill="#000"/>
<rect x="881" y="649" width="1" height="2" fill="#000"/>
<rect x="890" y="649" width="1" height="2" fill="#000"/>
<rect x="899" y="649" width="1" height="5" fill="#000"/>
<rect x="907" y="649" width="1" height="2" fill="#000"/>
<rect x="916" y="649" width="1" height="2" fill="#000"/>
<rect x="925" y="649" width="1" height="2" fill="#000"/>
<rect x="933" y="649" width="1" height="2" fill="#000"/>
<rect x="942" y="649" width="1" height="5" fill="#000"/>
<rect x="951" y="649" width="1" height="2" fill="#000"/>
<rect x="959" y="649" width="1" height="2" fill="#000"/>
<rect x="968" y="649" width="1" height="2" fill="#000"/>
<rect x="976" y="649" width="1" height="2" fill="#000"/>
<rect x="985" y="649" width="1" height="5" fill="#000"/>
<rect x="994" y="649" width="1" height="2" fill="#000"/>
<rect x="1002" y="649" width="1" height="2" fill="#000"/>
<rect x="1011" y="649" width="1" height="2" fill="#000"/>
<rect x="1020" y="649" width="1" height="2" fill="#000"/>
<rect x="345" y="641" width="1" height="7" fill="#000"/>
<rect x="379" y="640" width="1" height="8" fill="#000"/>
<rect x="449" y="641" width="1" height="7" fill="#000"/>
<rect x="466" y="619" width="1" height="29" fill="#000"/>
<rect x="483" y="643" width="1" height="5" fill="#000"/>
<rect x="570" y="640" width="1" height="8" fill="#000"/>
<rect x="578" y="636" width="1" height="12" fill="#000"/>
<rect x="587" y="616" width="1" height="32" fill="#000"/>
<rect x="604" y="641" width="1" height="7" fill="#000"/>
<rect x="691" y="640" width="1" height="8" fill="#000"/>
<rect x="708" y="636" width="1" height="12" fill="#000"/>
<rect x="717" y="610" width="1" height="38" fill="#000"/>
<rect x="847" y="637" width="1" height="11" fill="#000"/>
<rect x="373" y="646" width="1" height="2" fill="#fff"/>
<rect x="451" y="643" width="1" height="5" fill="#fff"/>
<rect x="589" y="619" width="1" height="29" fill="#fff"/>
<rect x="606" y="644" width="1" height="4" fill="#fff"/>
<rect x="710" y="634" width="1" height="14" fill="#fff"/>
<rect x="719" y="611" width="1" height="37" fill="#fff"/>
<rect x="849" y="636" width="1" height="12" fill="#fff"/>
<rect x="978" y="645" width="1" height="3" fill="#fff"/>
</g>
<text x="379.3" y="636" text-anchor="middle" fill="#000" style="letter-spacing:0.55px">55</text>
<text x="465.8" y="615" text-anchor="middle" fill="#000" style="letter-spacing:0.55px">65</text>
<text x="587.0" y="612" text-anchor="middle" fill="#000" style="letter-spacing:0.55px">79</text>
<text x="716.8" y="606" text-anchor="middle" fill="#000" style="letter-spacing:0.55px">94</text>
<text x="846.6" y="632.5" text-anchor="middle" fill="#000" style="letter-spacing:0.55px">109</text>
<text x="976.5" y="641" text-anchor="middle" fill="#000" style="letter-spacing:0.55px">124</text>
<text x="321.5" y="615" text-anchor="end" fill="#000" style="letter-spacing:0.55px">100</text>
<text x="321.5" y="634" text-anchor="end" fill="#000" style="letter-spacing:0.55px">50</text>
<text x="321.5" y="653" text-anchor="end" fill="#000" style="letter-spacing:0.55px">0</text>
<text x="293" y="667" text-anchor="start" fill="#000" >m/z:</text>
<text x="336.0" y="667.5" text-anchor="middle" fill="#000" style="letter-spacing:0.55px">50</text>
<text x="379.3" y="667.5" text-anchor="middle" fill="#000" style="letter-spacing:0.55px">55</text>
<text x="422.6" y="667.5" text-anchor="middle" fill="#000" style="letter-spacing:0.55px">60</text>
<text x="465.8" y="667.5" text-anchor="middle" fill="#000" style="letter-spacing:0.55px">65</text>
<text x="509.1" y="667.5" text-anchor="middle" fill="#000" style="letter-spacing:0.55px">70</text>
<text x="552.4" y="667.5" text-anchor="middle" fill="#000" style="letter-spacing:0.55px">75</text>
<text x="595.6" y="667.5" text-anchor="middle" fill="#000" style="letter-spacing:0.55px">80</text>
<text x="638.9" y="667.5" text-anchor="middle" fill="#000" style="letter-spacing:0.55px">85</text>
<text x="682.2" y="667.5" text-anchor="middle" fill="#000" style="letter-spacing:0.55px">90</text>
<text x="725.5" y="667.5" text-anchor="middle" fill="#000" style="letter-spacing:0.55px">95</text>
<text x="768.7" y="667.5" text-anchor="middle" fill="#000" style="letter-spacing:0.55px">100</text>
<text x="812.0" y="667.5" text-anchor="middle" fill="#000" style="letter-spacing:0.55px">105</text>
<text x="855.3" y="667.5" text-anchor="middle" fill="#000" style="letter-spacing:0.55px">110</text>
<text x="898.6" y="667.5" text-anchor="middle" fill="#000" style="letter-spacing:0.55px">115</text>
<text x="941.8" y="667.5" text-anchor="middle" fill="#000" style="letter-spacing:0.55px">120</text>
<text x="985.1" y="667.5" text-anchor="middle" fill="#000" style="letter-spacing:0.55px">125</text>
<g shape-rendering="crispEdges">
<rect x="329" y="695" width="696" height="60" fill="#808080"/>
<rect x="328" y="695" width="697" height="1" fill="#00f"/>
<rect x="328" y="695" width="2" height="59" fill="#00f"/>
<rect x="1023" y="695" width="1" height="59" fill="#00f"/><rect x="1024" y="695" width="1" height="60" fill="#000"/>
<rect x="321" y="754" width="704" height="1" fill="#000"/>
<rect x="324" y="744" width="5" height="1" fill="#000"/>
<rect x="321" y="735" width="8" height="1" fill="#000"/>
<rect x="324" y="725" width="5" height="1" fill="#000"/>
<rect x="321" y="716" width="8" height="1" fill="#000"/>
<rect x="336" y="755" width="1" height="5" fill="#000"/>
<rect x="345" y="755" width="1" height="2" fill="#000"/>
<rect x="353" y="755" width="1" height="2" fill="#000"/>
<rect x="362" y="755" width="1" height="2" fill="#000"/>
<rect x="371" y="755" width="1" height="2" fill="#000"/>
<rect x="379" y="755" width="1" height="5" fill="#000"/>
<rect x="388" y="755" width="1" height="2" fill="#000"/>
<rect x="397" y="755" width="1" height="2" fill="#000"/>
<rect x="405" y="755" width="1" height="2" fill="#000"/>
<rect x="414" y="755" width="1" height="2" fill="#000"/>
<rect x="423" y="755" width="1" height="5" fill="#000"/>
<rect x="431" y="755" width="1" height="2" fill="#000"/>
<rect x="440" y="755" width="1" height="2" fill="#000"/>
<rect x="449" y="755" width="1" height="2" fill="#000"/>
<rect x="457" y="755" width="1" height="2" fill="#000"/>
<rect x="466" y="755" width="1" height="5" fill="#000"/>
<rect x="474" y="755" width="1" height="2" fill="#000"/>
<rect x="483" y="755" width="1" height="2" fill="#000"/>
<rect x="492" y="755" width="1" height="2" fill="#000"/>
<rect x="500" y="755" width="1" height="2" fill="#000"/>
<rect x="509" y="755" width="1" height="5" fill="#000"/>
<rect x="518" y="755" width="1" height="2" fill="#000"/>
<rect x="526" y="755" width="1" height="2" fill="#000"/>
<rect x="535" y="755" width="1" height="2" fill="#000"/>
<rect x="544" y="755" width="1" height="2" fill="#000"/>
<rect x="552" y="755" width="1" height="5" fill="#000"/>
<rect x="561" y="755" width="1" height="2" fill="#000"/>
<rect x="570" y="755" width="1" height="2" fill="#000"/>
<rect x="578" y="755" width="1" height="2" fill="#000"/>
<rect x="587" y="755" width="1" height="2" fill="#000"/>
<rect x="596" y="755" width="1" height="5" fill="#000"/>
<rect x="604" y="755" width="1" height="2" fill="#000"/>
<rect x="613" y="755" width="1" height="2" fill="#000"/>
<rect x="622" y="755" width="1" height="2" fill="#000"/>
<rect x="630" y="755" width="1" height="2" fill="#000"/>
<rect x="639" y="755" width="1" height="5" fill="#000"/>
<rect x="648" y="755" width="1" height="2" fill="#000"/>
<rect x="656" y="755" width="1" height="2" fill="#000"/>
<rect x="665" y="755" width="1" height="2" fill="#000"/>
<rect x="674" y="755" width="1" height="2" fill="#000"/>
<rect x="682" y="755" width="1" height="5" fill="#000"/>
<rect x="691" y="755" width="1" height="2" fill="#000"/>
<rect x="700" y="755" width="1" height="2" fill="#000"/>
<rect x="708" y="755" width="1" height="2" fill="#000"/>
<rect x="717" y="755" width="1" height="2" fill="#000"/>
<rect x="725" y="755" width="1" height="5" fill="#000"/>
<rect x="734" y="755" width="1" height="2" fill="#000"/>
<rect x="743" y="755" width="1" height="2" fill="#000"/>
<rect x="751" y="755" width="1" height="2" fill="#000"/>
<rect x="760" y="755" width="1" height="2" fill="#000"/>
<rect x="769" y="755" width="1" height="5" fill="#000"/>
<rect x="777" y="755" width="1" height="2" fill="#000"/>
<rect x="786" y="755" width="1" height="2" fill="#000"/>
<rect x="795" y="755" width="1" height="2" fill="#000"/>
<rect x="803" y="755" width="1" height="2" fill="#000"/>
<rect x="812" y="755" width="1" height="5" fill="#000"/>
<rect x="821" y="755" width="1" height="2" fill="#000"/>
<rect x="829" y="755" width="1" height="2" fill="#000"/>
<rect x="838" y="755" width="1" height="2" fill="#000"/>
<rect x="847" y="755" width="1" height="2" fill="#000"/>
<rect x="855" y="755" width="1" height="5" fill="#000"/>
<rect x="864" y="755" width="1" height="2" fill="#000"/>
<rect x="873" y="755" width="1" height="2" fill="#000"/>
<rect x="881" y="755" width="1" height="2" fill="#000"/>
<rect x="890" y="755" width="1" height="2" fill="#000"/>
<rect x="899" y="755" width="1" height="5" fill="#000"/>
<rect x="907" y="755" width="1" height="2" fill="#000"/>
<rect x="916" y="755" width="1" height="2" fill="#000"/>
<rect x="925" y="755" width="1" height="2" fill="#000"/>
<rect x="933" y="755" width="1" height="2" fill="#000"/>
<rect x="942" y="755" width="1" height="5" fill="#000"/>
<rect x="951" y="755" width="1" height="2" fill="#000"/>
<rect x="959" y="755" width="1" height="2" fill="#000"/>
<rect x="968" y="755" width="1" height="2" fill="#000"/>
<rect x="976" y="755" width="1" height="2" fill="#000"/>
<rect x="985" y="755" width="1" height="5" fill="#000"/>
<rect x="994" y="755" width="1" height="2" fill="#000"/>
<rect x="1002" y="755" width="1" height="2" fill="#000"/>
<rect x="1011" y="755" width="1" height="2" fill="#000"/>
<rect x="1020" y="755" width="1" height="2" fill="#000"/>
<rect x="449" y="746" width="1" height="8" fill="#000"/>
<rect x="570" y="752" width="1" height="2" fill="#000"/>
<rect x="587" y="716" width="1" height="38" fill="#000"/>
<rect x="708" y="740" width="1" height="14" fill="#000"/>
<rect x="717" y="718" width="1" height="36" fill="#000"/>
<rect x="847" y="743" width="1" height="11" fill="#000"/>
<rect x="976" y="749" width="1" height="5" fill="#000"/>
<rect x="373" y="752" width="1" height="2" fill="#fff"/>
<rect x="451" y="749" width="1" height="5" fill="#fff"/>
<rect x="589" y="725" width="1" height="29" fill="#fff"/>
<rect x="606" y="750" width="1" height="4" fill="#fff"/>
<rect x="710" y="740" width="1" height="14" fill="#fff"/>
<rect x="719" y="717" width="1" height="37" fill="#fff"/>
<rect x="849" y="742" width="1" height="12" fill="#fff"/>
<rect x="978" y="751" width="1" height="3" fill="#fff"/>
</g>
<text x="370.6" y="747" text-anchor="middle" fill="#000" style="letter-spacing:0.55px">54</text>
<text x="448.5" y="741" text-anchor="middle" fill="#000" style="letter-spacing:0.55px">63</text>
<text x="587.0" y="712" text-anchor="middle" fill="#000" style="letter-spacing:0.55px">79</text>
<text x="716.8" y="712" text-anchor="middle" fill="#000" style="letter-spacing:0.55px">94</text>
<text x="846.6" y="737" text-anchor="middle" fill="#000" style="letter-spacing:0.55px">109</text>
<text x="976.5" y="745" text-anchor="middle" fill="#000" style="letter-spacing:0.55px">124</text>
<text x="321.5" y="721" text-anchor="end" fill="#000" style="letter-spacing:0.55px">100</text>
<text x="321.5" y="740" text-anchor="end" fill="#000" style="letter-spacing:0.55px">50</text>
<text x="321.5" y="759" text-anchor="end" fill="#000" style="letter-spacing:0.55px">0</text>
<text x="293" y="773" text-anchor="start" fill="#000" >m/z:</text>
<text x="336.0" y="773.5" text-anchor="middle" fill="#000" style="letter-spacing:0.55px">50</text>
<text x="379.3" y="773.5" text-anchor="middle" fill="#000" style="letter-spacing:0.55px">55</text>
<text x="422.6" y="773.5" text-anchor="middle" fill="#000" style="letter-spacing:0.55px">60</text>
<text x="465.8" y="773.5" text-anchor="middle" fill="#000" style="letter-spacing:0.55px">65</text>
<text x="509.1" y="773.5" text-anchor="middle" fill="#000" style="letter-spacing:0.55px">70</text>
<text x="552.4" y="773.5" text-anchor="middle" fill="#000" style="letter-spacing:0.55px">75</text>
<text x="595.6" y="773.5" text-anchor="middle" fill="#000" style="letter-spacing:0.55px">80</text>
<text x="638.9" y="773.5" text-anchor="middle" fill="#000" style="letter-spacing:0.55px">85</text>
<text x="682.2" y="773.5" text-anchor="middle" fill="#000" style="letter-spacing:0.55px">90</text>
<text x="725.5" y="773.5" text-anchor="middle" fill="#000" style="letter-spacing:0.55px">95</text>
<text x="768.7" y="773.5" text-anchor="middle" fill="#000" style="letter-spacing:0.55px">100</text>
<text x="812.0" y="773.5" text-anchor="middle" fill="#000" style="letter-spacing:0.55px">105</text>
<text x="855.3" y="773.5" text-anchor="middle" fill="#000" style="letter-spacing:0.55px">110</text>
<text x="898.6" y="773.5" text-anchor="middle" fill="#000" style="letter-spacing:0.55px">115</text>
<text x="941.8" y="773.5" text-anchor="middle" fill="#000" style="letter-spacing:0.55px">120</text>
<text x="985.1" y="773.5" text-anchor="middle" fill="#000" style="letter-spacing:0.55px">125</text>
<text x="293" y="584" text-anchor="start" fill="#000"  textLength="115" lengthAdjust="spacing">Abundance [17.1]</text>
<g shape-rendering="crispEdges"><rect x="532" y="573" width="1" height="13" fill="#000"/><rect x="690" y="573" width="1" height="13" fill="#fff"/><rect x="406" y="679" width="1" height="13" fill="#000"/><rect x="780" y="679" width="1" height="13" fill="#fff"/></g>
<text x="538" y="584" text-anchor="start" fill="#000"  textLength="147" lengthAdjust="spacing">Scan 41 (3.65 min) and</text>
<text x="696" y="584" text-anchor="start" fill="#000"  textLength="206" lengthAdjust="spacing">Extracted spectrum (3.644 min)</text>
<text x="413" y="690" text-anchor="start" fill="#000"  textLength="361" lengthAdjust="spacing">Library Hit: Dimethyl methylphosphonate (DMMP) and</text>
<text x="787" y="690" text-anchor="start" fill="#000"  textLength="128" lengthAdjust="spacing">Extracted spectrum</text>
</svg>
</body></html>
